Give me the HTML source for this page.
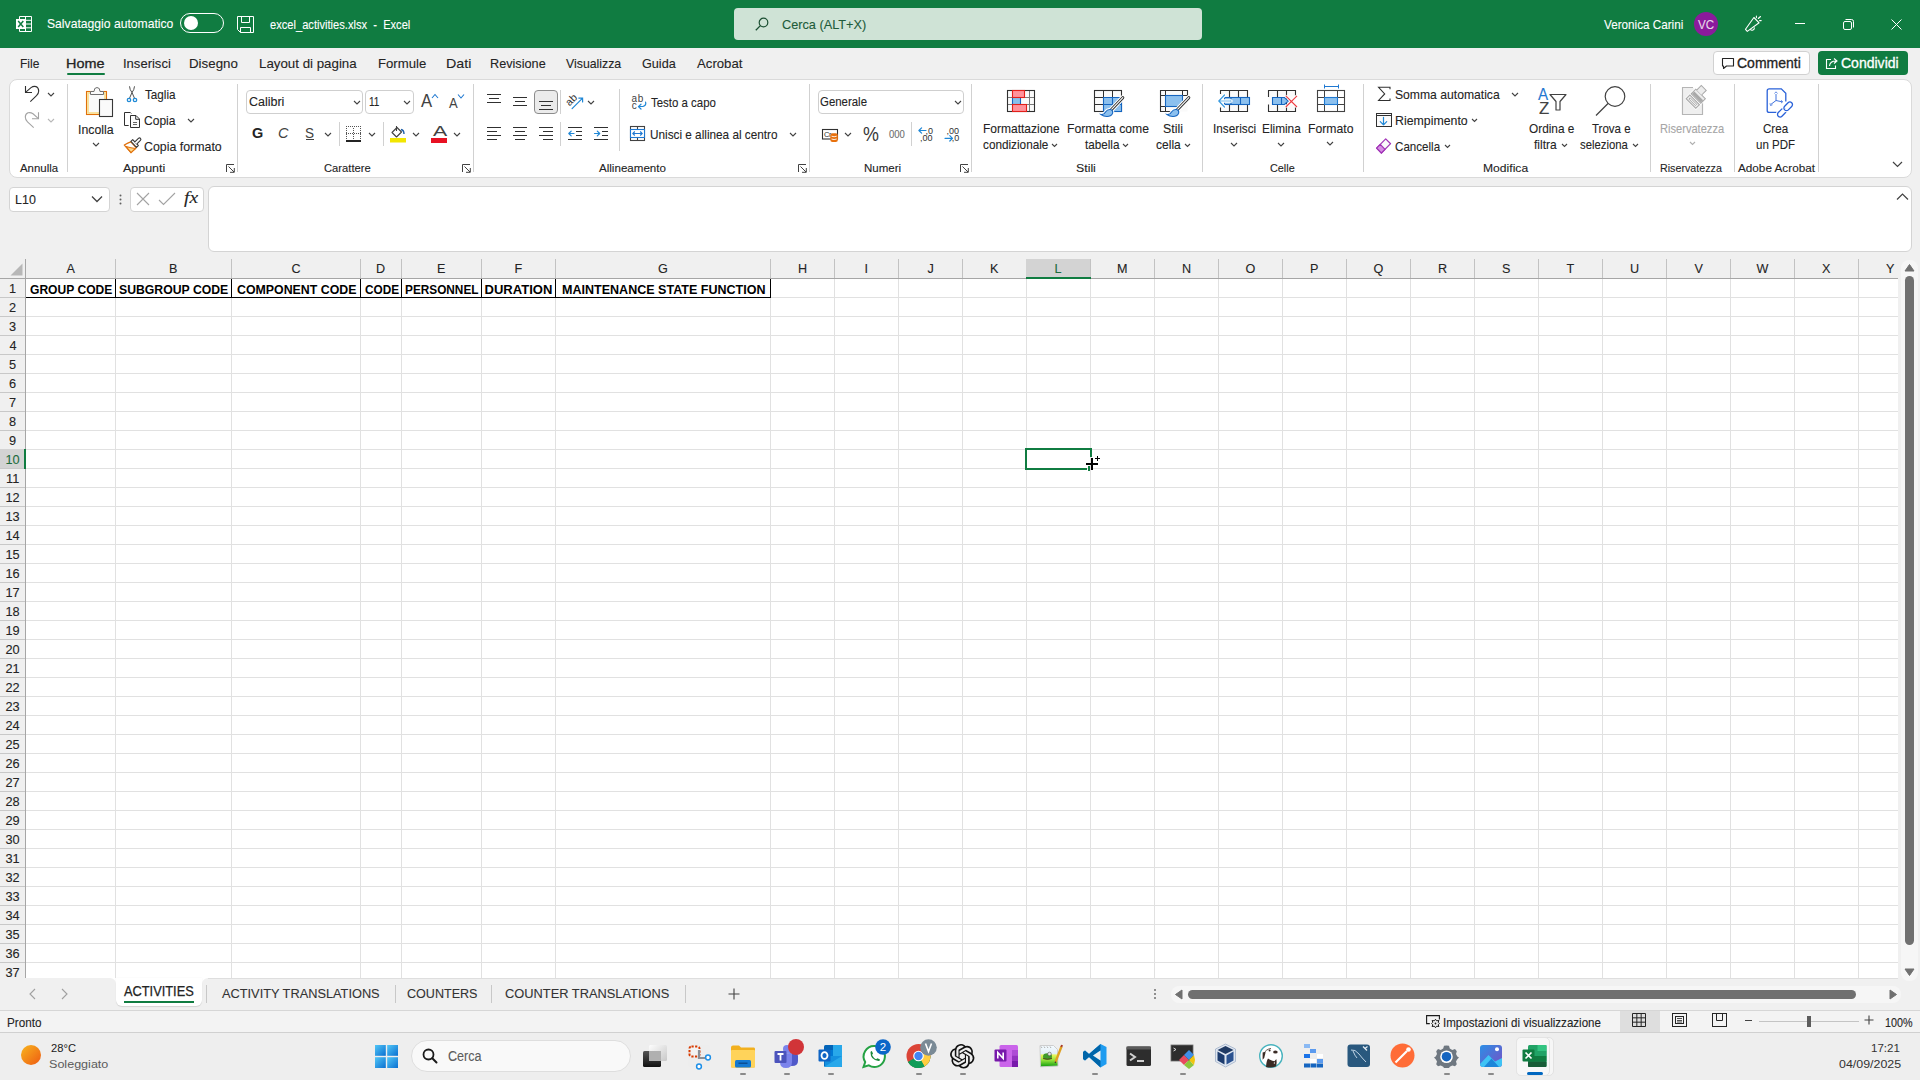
<!DOCTYPE html>
<html><head><meta charset="utf-8"><title>Excel</title>
<style>
html,body{margin:0;padding:0;width:1920px;height:1080px;overflow:hidden;background:#f0f0f0;font-family:'Liberation Sans', sans-serif;}
svg{overflow:visible}
</style></head><body>
<div style="position:absolute;left:0px;top:0px;width:1920px;height:48px;background:#107c41;"></div>
<svg style="position:absolute;left:16px;top:16px;" width="17" height="17" viewBox="0 0 17 17">
<path d="M3.5 0.5h12v15h-12z" fill="none" stroke="#fff" stroke-width="1"/>
<path d="M3.5 4.3h12M3.5 8h12M3.5 11.8h12M9.5 0.5v15" stroke="#fff" stroke-width="1"/>
<rect x="0" y="3" width="9.5" height="10" fill="#fff"/>
<path d="M2.2 5.1L7.3 11.1M7.3 5.1L2.2 11.1" stroke="#107c41" stroke-width="1.5"/>
</svg>
<div style="position:absolute;left:47.07px;top:17.00px;font:normal normal 13.04px/13.04px 'Liberation Sans', sans-serif;color:#fff;white-space:pre;transform:scaleX(0.9328);transform-origin:0 0;-webkit-text-stroke:0.1px #fff;">Salvataggio automatico</div>
<div style="position:absolute;left:180px;top:13px;width:44px;height:20px;box-sizing:border-box;border:1px solid #fff;border-radius:10px;"></div>
<svg style="position:absolute;left:184px;top:16px;" width="14" height="14" viewBox="0 0 14 14"><circle cx="7" cy="7" r="7" fill="#fff"/></svg>
<svg style="position:absolute;left:237px;top:16px;" width="17" height="17" viewBox="0 0 17 17">
<path d="M0.5 0.5h16v16h-13l-3-3z" fill="none" stroke="#fff"/>
<path d="M4.5 0.5v6h8v-6M3.5 16.5v-5h10v5" fill="none" stroke="#fff"/>
</svg>
<div style="position:absolute;left:270.00px;top:18.00px;font:normal normal 13.04px/13.04px 'Liberation Sans', sans-serif;color:#fff;white-space:pre;transform:scaleX(0.8537);transform-origin:0 0;-webkit-text-stroke:0.1px #fff;">excel_activities.xlsx  -  Excel</div>
<div style="position:absolute;left:734px;top:8px;width:468px;height:32px;box-sizing:border-box;background:#cfe3d6;border-radius:4px;"></div>
<svg style="position:absolute;left:755px;top:17px;" width="14" height="14" viewBox="0 0 14 14"><circle cx="8.5" cy="5.5" r="4.3" fill="none" stroke="#1c4f33" stroke-width="1.2"/><path d="M5.4 8.6L0.8 13.2" stroke="#1c4f33" stroke-width="1.3"/></svg>
<div style="position:absolute;left:782.02px;top:18.00px;font:normal normal 13.04px/13.04px 'Liberation Sans', sans-serif;color:#215b3a;white-space:pre;transform:scaleX(0.9765);transform-origin:0 0;-webkit-text-stroke:0.1px #215b3a;">Cerca (ALT+X)</div>
<div style="position:absolute;left:1604.00px;top:18.00px;font:normal normal 13.04px/13.04px 'Liberation Sans', sans-serif;color:#fff;white-space:pre;transform:scaleX(0.8977);transform-origin:0 0;-webkit-text-stroke:0.1px #fff;">Veronica Carini</div>
<svg style="position:absolute;left:1694px;top:12px;" width="24" height="24" viewBox="0 0 24 24"><circle cx="12" cy="12" r="12" fill="#8b1a9c"/></svg>
<div style="position:absolute;left:1697.50px;top:19.00px;font:normal normal 12.32px/12.32px 'Liberation Sans', sans-serif;color:#e8d8ea;white-space:pre;transform:scaleX(0.9375);transform-origin:0 0;-webkit-text-stroke:0.1px #e8d8ea;">VC</div>
<svg style="position:absolute;left:1740px;top:12px;" width="24" height="24" viewBox="0 0 24 24">
<path d="M5.5 17.3L13.9 5.5L19.1 10.8L7.3 19.4Z" fill="none" stroke="#fff" stroke-width="1.1" stroke-linejoin="round"/>
<path d="M10.2 17.2A2.3 2.3 0 0 0 14.3 15.3" fill="none" stroke="#fff" stroke-width="1.1"/>
<path d="M16.4 4V5.6M18.3 6.5L20.5 4.5M19.6 8.6H21.2" stroke="#fff" stroke-width="1.1" stroke-linecap="round"/>
</svg>
<div style="position:absolute;left:1795px;top:23px;width:10px;height:1px;background:#fff;"></div>
<svg style="position:absolute;left:1840px;top:16px;" width="16" height="16" viewBox="0 0 16 16"><rect x="3.5" y="5.5" width="8" height="8" rx="1.5" fill="none" stroke="#fff" stroke-width="1"/><path d="M5.5 3.5H11.5Q13.5 3.5 13.5 5.5V11.5" fill="none" stroke="#fff" stroke-width="1"/></svg>
<svg style="position:absolute;left:1891px;top:19px;" width="11" height="11" viewBox="0 0 11 11"><path d="M0.5 0.5l10 10M10.5 0.5l-10 10" stroke="#fff" stroke-width="1"/></svg>
<div style="position:absolute;left:20.07px;top:57.00px;font:normal normal 13.04px/13.04px 'Liberation Sans', sans-serif;color:#242424;white-space:pre;transform:scaleX(0.9250);transform-origin:0 0;-webkit-text-stroke:0.1px #242424;">File</div>
<div style="position:absolute;left:66.39px;top:57.00px;font:normal normal 13.04px/13.04px 'Liberation Sans', sans-serif;color:#242424;white-space:pre;transform:scaleX(1.1061);transform-origin:0 0;-webkit-text-stroke:0.3px #242424;">Home</div>
<div style="position:absolute;left:123.00px;top:57.00px;font:normal normal 13.04px/13.04px 'Liberation Sans', sans-serif;color:#242424;white-space:pre;-webkit-text-stroke:0.1px #242424;">Inserisci</div>
<div style="position:absolute;left:189.48px;top:57.00px;font:normal normal 13.04px/13.04px 'Liberation Sans', sans-serif;color:#242424;white-space:pre;transform:scaleX(1.0217);transform-origin:0 0;-webkit-text-stroke:0.1px #242424;">Disegno</div>
<div style="position:absolute;left:258.98px;top:57.00px;font:normal normal 13.04px/13.04px 'Liberation Sans', sans-serif;color:#242424;white-space:pre;transform:scaleX(1.0211);transform-origin:0 0;-webkit-text-stroke:0.1px #242424;">Layout di pagina</div>
<div style="position:absolute;left:377.99px;top:57.00px;font:normal normal 13.04px/13.04px 'Liberation Sans', sans-serif;color:#242424;white-space:pre;transform:scaleX(1.0109);transform-origin:0 0;-webkit-text-stroke:0.1px #242424;">Formule</div>
<div style="position:absolute;left:445.90px;top:57.00px;font:normal normal 13.04px/13.04px 'Liberation Sans', sans-serif;color:#242424;white-space:pre;transform:scaleX(1.0952);transform-origin:0 0;-webkit-text-stroke:0.1px #242424;">Dati</div>
<div style="position:absolute;left:490.03px;top:57.00px;font:normal normal 13.04px/13.04px 'Liberation Sans', sans-serif;color:#242424;white-space:pre;transform:scaleX(0.9732);transform-origin:0 0;-webkit-text-stroke:0.1px #242424;">Revisione</div>
<div style="position:absolute;left:566.00px;top:57.00px;font:normal normal 13.04px/13.04px 'Liberation Sans', sans-serif;color:#242424;white-space:pre;transform:scaleX(0.9449);transform-origin:0 0;-webkit-text-stroke:0.1px #242424;">Visualizza</div>
<div style="position:absolute;left:641.53px;top:57.00px;font:normal normal 13.04px/13.04px 'Liberation Sans', sans-serif;color:#242424;white-space:pre;transform:scaleX(0.9706);transform-origin:0 0;-webkit-text-stroke:0.1px #242424;">Guida</div>
<div style="position:absolute;left:697.00px;top:57.00px;font:normal normal 13.04px/13.04px 'Liberation Sans', sans-serif;color:#242424;white-space:pre;transform:scaleX(1.0111);transform-origin:0 0;-webkit-text-stroke:0.1px #242424;">Acrobat</div>
<div style="position:absolute;left:67px;top:73px;width:38px;height:2px;background:#107c41;border-radius:1px;"></div>
<div style="position:absolute;left:1713px;top:51px;width:97px;height:24px;box-sizing:border-box;background:#fff;border:1px solid #d1d1d1;border-radius:4px;"></div>
<svg style="position:absolute;left:1721px;top:57px;" width="14" height="13" viewBox="0 0 14 13"><path d="M1.5 1.5h11v7.5h-7l-3 2.5v-2.5h-1z" fill="none" stroke="#242424" stroke-width="1.1" stroke-linejoin="round"/></svg>
<div style="position:absolute;left:1736.98px;top:57.00px;font:normal normal 13.77px/13.77px 'Liberation Sans', sans-serif;color:#242424;white-space:pre;transform:scaleX(1.0164);transform-origin:0 0;-webkit-text-stroke:0.3px #242424;">Commenti</div>
<div style="position:absolute;left:1818px;top:51px;width:90px;height:24px;box-sizing:border-box;background:#107c41;border-radius:4px;"></div>
<svg style="position:absolute;left:1825px;top:57px;" width="14" height="13" viewBox="0 0 14 13"><path d="M6 2.5h-4.5v9h9v-3" fill="none" stroke="#fff" stroke-width="1.1"/><path d="M4.5 9q0.5-5 6.5-5M9 1.5l3 2.5-3 2.5" fill="none" stroke="#fff" stroke-width="1.1"/></svg>
<div style="position:absolute;left:1840.98px;top:57.00px;font:normal normal 13.77px/13.77px 'Liberation Sans', sans-serif;color:#fff;white-space:pre;transform:scaleX(1.0182);transform-origin:0 0;-webkit-text-stroke:0.3px #fff;">Condividi</div>
<div style="position:absolute;left:9px;top:79px;width:1903px;height:99px;box-sizing:border-box;background:#fff;border:1px solid #dadada;border-radius:8px;"></div>
<svg style="position:absolute;left:0;top:0" width="70" height="140">
<path d="M25.5 86V92.5H32" fill="none" stroke="#303030" stroke-width="1.1"/>
<path d="M25.8 92.2L31 87.6Q33.5 85.9 36 86.6Q38.7 87.9 38.7 91Q38.7 93.6 36.5 95.6L30.3 101.7" fill="none" stroke="#303030" stroke-width="1.1"/>
<path d="M38.5 112.3V118.7H32" fill="none" stroke="#a3a3a3" stroke-width="1.1"/>
<path d="M38.2 118.4L33 113.8Q30.5 112.1 28 112.8Q25.3 114 25.3 117.1Q25.3 119.7 27.5 121.8L33.7 127.6" fill="none" stroke="#a3a3a3" stroke-width="1.1"/>
</svg>
<svg style="position:absolute;left:46.5px;top:92px;" width="8" height="5.0" viewBox="0 0 8 5.0"><path d="M1 1L4.0 4.0L7 1" fill="none" stroke="#424242" stroke-width="1.1"/></svg>
<svg style="position:absolute;left:46.5px;top:118px;" width="8" height="5.0" viewBox="0 0 8 5.0"><path d="M1 1L4.0 4.0L7 1" fill="none" stroke="#b8b8b8" stroke-width="1.1"/></svg>
<div style="position:absolute;left:67px;top:84px;width:1px;height:88px;background:#d1d1d1;"></div>
<div style="position:absolute;left:19.50px;top:163.00px;font:normal normal 11.59px/11.59px 'Liberation Sans', sans-serif;color:#242424;white-space:pre;transform:scaleX(0.9872);transform-origin:0 0;-webkit-text-stroke:0.1px #242424;">Annulla</div>
<svg style="position:absolute;left:85px;top:86px;" width="30" height="33" viewBox="0 0 30 33">
<rect x="1.5" y="5.5" width="20" height="23" fill="#fafafa" stroke="#e0700b" stroke-width="1.1"/>
<rect x="3" y="7" width="17" height="20" fill="none" stroke="#f8dc8c" stroke-width="1.7"/>
<rect x="4" y="8" width="15" height="18" fill="#fafafa"/>
<path d="M5.5 8.5v-3h3.5q0-4 3-4t3 4h3.5v3z" fill="#fafafa" stroke="#707070" stroke-width="1"/>
<rect x="14.5" y="13.5" width="13" height="17" fill="#fafafa" stroke="#383838" stroke-width="1.1"/>
<rect x="13" y="12" width="1" height="1" fill="#fff"/>
</svg>
<div style="position:absolute;left:78.03px;top:124.00px;font:normal normal 12.68px/12.68px 'Liberation Sans', sans-serif;color:#242424;white-space:pre;transform:scaleX(0.9722);transform-origin:0 0;-webkit-text-stroke:0.1px #242424;">Incolla</div>
<svg style="position:absolute;left:92px;top:142px;" width="8" height="5.0" viewBox="0 0 8 5.0"><path d="M1 1L4.0 4.0L7 1" fill="none" stroke="#424242" stroke-width="1.1"/></svg>
<svg style="position:absolute;left:0;top:0" width="150" height="140">
<path d="M129.5 86.3Q129.8 90 132 92.5L129.6 98M134.5 86.3Q134.2 90 132 92.5L134.4 98" fill="none" stroke="#505050" stroke-width="1"/>
<circle cx="129" cy="100" r="1.7" fill="#fff" stroke="#1f8ad6" stroke-width="1.3"/>
<circle cx="135" cy="100" r="1.7" fill="#fff" stroke="#1f8ad6" stroke-width="1.3"/>
</svg>
<div style="position:absolute;left:144.50px;top:88.00px;font:normal normal 13.04px/13.04px 'Liberation Sans', sans-serif;color:#242424;white-space:pre;transform:scaleX(0.8971);transform-origin:0 0;-webkit-text-stroke:0.1px #242424;">Taglia</div>
<svg style="position:absolute;left:0;top:0" width="150" height="140">
<path d="M128.7 125.5H124.5V112.5H130.3L131.3 113.5" fill="none" stroke="#303030" stroke-width="1"/>
<path d="M130.5 115.5H136L139.5 119V127.5H130.5Z" fill="#fafafa" stroke="#303030" stroke-width="1"/>
<path d="M135.7 115.7V119.3H139.3" fill="none" stroke="#303030" stroke-width="1"/>
<path d="M133 122.5H137M133 124.5H137" stroke="#505050" stroke-width="0.9"/>
</svg>
<div style="position:absolute;left:143.58px;top:114.00px;font:normal normal 13.04px/13.04px 'Liberation Sans', sans-serif;color:#242424;white-space:pre;transform:scaleX(0.9242);transform-origin:0 0;-webkit-text-stroke:0.1px #242424;">Copia</div>
<svg style="position:absolute;left:187px;top:118px;" width="8" height="5.0" viewBox="0 0 8 5.0"><path d="M1 1L4.0 4.0L7 1" fill="none" stroke="#424242" stroke-width="1.1"/></svg>
<svg style="position:absolute;left:118px;top:132px;" width="26" height="24" viewBox="0 0 26 24">
<path d="M6.3 13Q10 11 12.8 9.9L18.3 15.9Q15 18.5 13 20.7Z" fill="#fff" stroke="#e0700b" stroke-width="1.2" stroke-linejoin="round"/>
<path d="M8 14.5Q13 16 17.5 16.5L13 20.7Z" fill="#fbd88a" stroke="#e0700b" stroke-width="1.1" stroke-linejoin="round"/>
<path d="M12.9 9.4L14.7 7.7L20.3 13.5L18.5 15.4Z" fill="#fff" stroke="#383838" stroke-width="1.1" stroke-linejoin="round"/>
<path d="M16.6 10.2L20.4 6.4Q21.6 5.4 22.5 6.4Q23.4 7.4 22.4 8.4L18.7 12.2" fill="#fff" stroke="#383838" stroke-width="1.1" stroke-linejoin="round"/>
</svg>
<div style="position:absolute;left:143.55px;top:140.00px;font:normal normal 13.04px/13.04px 'Liberation Sans', sans-serif;color:#242424;white-space:pre;transform:scaleX(0.9500);transform-origin:0 0;-webkit-text-stroke:0.1px #242424;">Copia formato</div>
<div style="position:absolute;left:123.00px;top:163.00px;font:normal normal 11.59px/11.59px 'Liberation Sans', sans-serif;color:#242424;white-space:pre;transform:scaleX(1.0769);transform-origin:0 0;-webkit-text-stroke:0.1px #242424;">Appunti</div>
<svg style="position:absolute;left:226px;top:164px;" width="9" height="9" viewBox="0 0 9 9"><path d="M0.5 8V0.5H8" fill="none" stroke="#424242"/><path d="M2.5 2.5L8 8M8.3 4v4.3H4" fill="none" stroke="#424242"/></svg>
<div style="position:absolute;left:237px;top:84px;width:1px;height:88px;background:#d1d1d1;"></div>
<div style="position:absolute;left:246px;top:90px;width:117px;height:24px;box-sizing:border-box;border:1px solid #cfcfcf;border-radius:4px;background:#fff;"></div>
<div style="position:absolute;left:248.51px;top:96.00px;font:normal normal 12.68px/12.68px 'Liberation Sans', sans-serif;color:#242424;white-space:pre;transform:scaleX(0.9853);transform-origin:0 0;-webkit-text-stroke:0.1px #242424;">Calibri</div>
<svg style="position:absolute;left:353px;top:100px;" width="8" height="5.0" viewBox="0 0 8 5.0"><path d="M1 1L4.0 4.0L7 1" fill="none" stroke="#424242" stroke-width="1.1"/></svg>
<div style="position:absolute;left:365px;top:90px;width:49px;height:24px;box-sizing:border-box;border:1px solid #cfcfcf;border-radius:4px;background:#fff;"></div>
<div style="position:absolute;left:368.71px;top:96.00px;font:normal normal 12.68px/12.68px 'Liberation Sans', sans-serif;color:#242424;white-space:pre;transform:scaleX(0.7917);transform-origin:0 0;-webkit-text-stroke:0.1px #242424;">11</div>
<svg style="position:absolute;left:403px;top:100px;" width="8" height="5.0" viewBox="0 0 8 5.0"><path d="M1 1L4.0 4.0L7 1" fill="none" stroke="#424242" stroke-width="1.1"/></svg>
<div style="position:absolute;left:421.00px;top:92.00px;font:normal normal 18.84px/18.84px 'Liberation Sans', sans-serif;color:#424242;white-space:pre;transform:scaleX(0.8846);transform-origin:0 0;-webkit-text-stroke:0.01px #424242;">A</div>
<svg style="position:absolute;left:431px;top:93px;" width="8" height="6" viewBox="0 0 8 6"><path d="M1 5L4 1.5L7 5" fill="none" stroke="#1f78d1" stroke-width="1.1"/></svg>
<div style="position:absolute;left:449.00px;top:97.00px;font:normal normal 13.77px/13.77px 'Liberation Sans', sans-serif;color:#424242;white-space:pre;transform:scaleX(0.9444);transform-origin:0 0;-webkit-text-stroke:0.01px #424242;">A</div>
<svg style="position:absolute;left:457px;top:93px;" width="8" height="6" viewBox="0 0 8 6"><path d="M1 1.5L4 5L7 1.5" fill="none" stroke="#1f78d1" stroke-width="1.1"/></svg>
<div style="position:absolute;left:252.05px;top:125.00px;font:normal bold 15.22px/15.22px 'Liberation Sans', sans-serif;color:#242424;white-space:pre;transform:scaleX(0.9500);transform-origin:0 0;">G</div>
<div style="position:absolute;left:278.05px;top:125.00px;font:italic normal 15.22px/15.22px 'Liberation Sans', sans-serif;color:#424242;white-space:pre;transform:scaleX(0.9500);transform-origin:0 0;-webkit-text-stroke:0.01px #424242;">C</div>
<div style="position:absolute;left:305.11px;top:125.00px;font:normal normal 15.22px/15.22px 'Liberation Sans', sans-serif;color:#424242;white-space:pre;transform:scaleX(0.8889);transform-origin:0 0;-webkit-text-stroke:0.01px #424242;">S</div>
<div style="position:absolute;left:306px;top:139px;width:8px;height:1px;background:#424242;"></div>
<svg style="position:absolute;left:324px;top:132px;" width="8" height="5.0" viewBox="0 0 8 5.0"><path d="M1 1L4.0 4.0L7 1" fill="none" stroke="#424242" stroke-width="1.1"/></svg>
<div style="position:absolute;left:339px;top:122px;width:1px;height:24px;background:#d1d1d1;"></div>
<svg style="position:absolute;left:0;top:0" width="480" height="180" shape-rendering="crispEdges"><g fill="#555"><rect x="346" y="126" width="1" height="1"/><rect x="346" y="133" width="1" height="1"/><rect x="348" y="126" width="1" height="1"/><rect x="348" y="133" width="1" height="1"/><rect x="350" y="126" width="1" height="1"/><rect x="350" y="133" width="1" height="1"/><rect x="352" y="126" width="1" height="1"/><rect x="352" y="133" width="1" height="1"/><rect x="354" y="126" width="1" height="1"/><rect x="354" y="133" width="1" height="1"/><rect x="356" y="126" width="1" height="1"/><rect x="356" y="133" width="1" height="1"/><rect x="358" y="126" width="1" height="1"/><rect x="358" y="133" width="1" height="1"/><rect x="360" y="126" width="1" height="1"/><rect x="360" y="133" width="1" height="1"/><rect x="346" y="128" width="1" height="1"/><rect x="360" y="128" width="1" height="1"/><rect x="353" y="128" width="1" height="1"/><rect x="346" y="130" width="1" height="1"/><rect x="360" y="130" width="1" height="1"/><rect x="353" y="130" width="1" height="1"/><rect x="346" y="132" width="1" height="1"/><rect x="360" y="132" width="1" height="1"/><rect x="353" y="132" width="1" height="1"/><rect x="346" y="134" width="1" height="1"/><rect x="360" y="134" width="1" height="1"/><rect x="353" y="134" width="1" height="1"/><rect x="346" y="136" width="1" height="1"/><rect x="360" y="136" width="1" height="1"/><rect x="353" y="136" width="1" height="1"/><rect x="346" y="138" width="1" height="1"/><rect x="360" y="138" width="1" height="1"/><rect x="353" y="138" width="1" height="1"/></g><rect x="346" y="140" width="15" height="1.5" fill="#242424"/></svg>
<svg style="position:absolute;left:368px;top:132px;" width="8" height="5.0" viewBox="0 0 8 5.0"><path d="M1 1L4.0 4.0L7 1" fill="none" stroke="#424242" stroke-width="1.1"/></svg>
<div style="position:absolute;left:383px;top:122px;width:1px;height:24px;background:#d1d1d1;"></div>
<svg style="position:absolute;left:389px;top:125px;" width="19" height="18" viewBox="0 0 19 18">
<path d="M3 7.5L8 2.5L12.5 7L7.5 12L3 7.5Z" fill="#fff" stroke="#424242" stroke-width="1.1" stroke-linejoin="round"/>
<path d="M7.5 1V6" stroke="#424242" stroke-width="1.1"/>
<path d="M12 4.5Q15 5 15 9" fill="none" stroke="#1f5fa8" stroke-width="1.4"/>
<rect x="1" y="13" width="16" height="4.5" fill="#f2e600"/>
</svg>
<svg style="position:absolute;left:412px;top:132px;" width="8" height="5.0" viewBox="0 0 8 5.0"><path d="M1 1L4.0 4.0L7 1" fill="none" stroke="#424242" stroke-width="1.1"/></svg>
<div style="position:absolute;left:432.50px;top:123.00px;font:normal normal 15.22px/15.22px 'Liberation Sans', sans-serif;color:#424242;white-space:pre;transform:scaleX(1.4000);transform-origin:0 0;-webkit-text-stroke:0.01px #424242;">A</div>
<div style="position:absolute;left:431px;top:138px;width:16px;height:4.5px;background:#e81123;"></div>
<svg style="position:absolute;left:453px;top:132px;" width="8" height="5.0" viewBox="0 0 8 5.0"><path d="M1 1L4.0 4.0L7 1" fill="none" stroke="#424242" stroke-width="1.1"/></svg>
<div style="position:absolute;left:323.53px;top:163.00px;font:normal normal 11.59px/11.59px 'Liberation Sans', sans-serif;color:#242424;white-space:pre;transform:scaleX(0.9681);transform-origin:0 0;-webkit-text-stroke:0.1px #242424;">Carattere</div>
<svg style="position:absolute;left:462px;top:164px;" width="9" height="9" viewBox="0 0 9 9"><path d="M0.5 8V0.5H8" fill="none" stroke="#424242"/><path d="M2.5 2.5L8 8M8.3 4v4.3H4" fill="none" stroke="#424242"/></svg>
<div style="position:absolute;left:473px;top:84px;width:1px;height:88px;background:#d1d1d1;"></div>
<svg style="position:absolute;left:0;top:0" width="700" height="180" shape-rendering="crispEdges"><rect x="487" y="94" width="14" height="1" fill="#303030"/><rect x="489" y="98" width="10" height="1" fill="#303030"/><rect x="487" y="102" width="14" height="1" fill="#303030"/></svg>
<svg style="position:absolute;left:0;top:0" width="700" height="180" shape-rendering="crispEdges"><rect x="513" y="97" width="14" height="1" fill="#303030"/><rect x="515" y="101" width="10" height="1" fill="#303030"/><rect x="513" y="105" width="14" height="1" fill="#303030"/></svg>
<div style="position:absolute;left:534px;top:90px;width:24px;height:24px;box-sizing:border-box;border:1px solid #8c8c8c;border-radius:4px;background:#ebebeb;"></div>
<svg style="position:absolute;left:0;top:0" width="700" height="180" shape-rendering="crispEdges"><rect x="539" y="101" width="14" height="1" fill="#303030"/><rect x="541" y="105" width="10" height="1" fill="#303030"/><rect x="539" y="109" width="14" height="1" fill="#303030"/></svg>
<div style="position:absolute;left:560px;top:90px;width:1px;height:24px;background:#d1d1d1;"></div>
<svg style="position:absolute;left:0;top:0" width="700" height="180">
<text x="0" y="0" transform="translate(569.5 106.5) rotate(-45)" font-family="Liberation Sans" font-size="10.5" fill="#303030">ab</text>
<path d="M572.1 108.6L582.6 98.1M578.8 98.1H582.6V101.9" fill="none" stroke="#1f87d6" stroke-width="1.2" stroke-linecap="round"/>
<text x="631.5" y="101.6" font-family="Liberation Sans" font-size="10" fill="#424242" letter-spacing="0.8">ab</text>
<text x="631.8" y="108.6" font-family="Liberation Sans" font-size="10" fill="#424242">c</text>
<path d="M645.6 102.2Q646.5 105.5 643 106.5H638.6M641 104.2L638.4 106.6L641 109" fill="none" stroke="#1f87d6" stroke-width="1.2" stroke-linecap="round" stroke-linejoin="round"/>
</svg>
<svg style="position:absolute;left:587px;top:100px;" width="8" height="5.0" viewBox="0 0 8 5.0"><path d="M1 1L4.0 4.0L7 1" fill="none" stroke="#424242" stroke-width="1.1"/></svg>
<div style="position:absolute;left:619px;top:89px;width:1px;height:62px;background:#d1d1d1;"></div>
<div style="position:absolute;left:650.60px;top:96.00px;font:normal normal 13.04px/13.04px 'Liberation Sans', sans-serif;color:#242424;white-space:pre;transform:scaleX(0.8784);transform-origin:0 0;-webkit-text-stroke:0.1px #242424;">Testo a capo</div>
<svg style="position:absolute;left:0;top:0" width="700" height="180" shape-rendering="crispEdges"><rect x="487" y="127" width="14" height="1" fill="#303030"/><rect x="487" y="131" width="10" height="1" fill="#303030"/><rect x="487" y="135" width="14" height="1" fill="#303030"/><rect x="487" y="139" width="10" height="1" fill="#303030"/></svg>
<svg style="position:absolute;left:0;top:0" width="700" height="180" shape-rendering="crispEdges"><rect x="513" y="127" width="14" height="1" fill="#303030"/><rect x="515" y="131" width="10" height="1" fill="#303030"/><rect x="513" y="135" width="14" height="1" fill="#303030"/><rect x="515" y="139" width="10" height="1" fill="#303030"/></svg>
<svg style="position:absolute;left:0;top:0" width="700" height="180" shape-rendering="crispEdges"><rect x="539" y="127" width="14" height="1" fill="#303030"/><rect x="543" y="131" width="10" height="1" fill="#303030"/><rect x="539" y="135" width="14" height="1" fill="#303030"/><rect x="543" y="139" width="10" height="1" fill="#303030"/></svg>
<div style="position:absolute;left:560px;top:122px;width:1px;height:24px;background:#d1d1d1;"></div>
<svg style="position:absolute;left:0;top:0" width="700" height="180" shape-rendering="crispEdges"><rect x="568" y="127" width="14" height="1" fill="#303030"/><rect x="576" y="131" width="6" height="1" fill="#303030"/><rect x="576" y="135" width="6" height="1" fill="#303030"/><rect x="568" y="139" width="14" height="1" fill="#303030"/></svg>
<svg style="position:absolute;left:0;top:0" width="700" height="180" shape-rendering="crispEdges"><rect x="594" y="127" width="14" height="1" fill="#303030"/><rect x="602" y="131" width="6" height="1" fill="#303030"/><rect x="602" y="135" width="6" height="1" fill="#303030"/><rect x="594" y="139" width="14" height="1" fill="#303030"/></svg>
<svg style="position:absolute;left:0;top:0" width="700" height="180">
<path d="M568.8 133.5H574M571.2 131.1L568.8 133.5L571.2 135.9" fill="none" stroke="#1f87d6" stroke-width="1.2" stroke-linecap="round" stroke-linejoin="round"/>
<path d="M594.5 133.5H599.7M597.3 131.1L599.7 133.5L597.3 135.9" fill="none" stroke="#1f87d6" stroke-width="1.2" stroke-linecap="round" stroke-linejoin="round"/>
</svg>
<svg style="position:absolute;left:629px;top:125px;" width="17" height="17" viewBox="0 0 17 17">
<rect x="1.5" y="1.5" width="14" height="14" fill="#fff" stroke="#424242" stroke-width="1.1"/>
<path d="M8.5 1.5V4.5M8.5 12.5V15.5" stroke="#424242" stroke-width="1.1"/>
<rect x="1.5" y="4.5" width="14" height="8" fill="#fff" stroke="#1f78d1" stroke-width="1.1"/>
<path d="M4 8.5H13M5.8 6.5L3.8 8.5L5.8 10.5M11.2 6.5L13.2 8.5L11.2 10.5" fill="none" stroke="#1f78d1" stroke-width="1.1"/>
</svg>
<div style="position:absolute;left:649.70px;top:128.00px;font:normal normal 13.04px/13.04px 'Liberation Sans', sans-serif;color:#242424;white-space:pre;transform:scaleX(0.9029);transform-origin:0 0;-webkit-text-stroke:0.1px #242424;">Unisci e allinea al centro</div>
<svg style="position:absolute;left:789px;top:132px;" width="8" height="5.0" viewBox="0 0 8 5.0"><path d="M1 1L4.0 4.0L7 1" fill="none" stroke="#424242" stroke-width="1.1"/></svg>
<div style="position:absolute;left:599.00px;top:163.00px;font:normal normal 11.59px/11.59px 'Liberation Sans', sans-serif;color:#242424;white-space:pre;-webkit-text-stroke:0.1px #242424;">Allineamento</div>
<svg style="position:absolute;left:798px;top:164px;" width="9" height="9" viewBox="0 0 9 9"><path d="M0.5 8V0.5H8" fill="none" stroke="#424242"/><path d="M2.5 2.5L8 8M8.3 4v4.3H4" fill="none" stroke="#424242"/></svg>
<div style="position:absolute;left:809px;top:84px;width:1px;height:88px;background:#d1d1d1;"></div>
<div style="position:absolute;left:818px;top:90px;width:146px;height:24px;box-sizing:border-box;border:1px solid #cfcfcf;border-radius:4px;background:#fff;"></div>
<div style="position:absolute;left:820.10px;top:96.00px;font:normal normal 12.68px/12.68px 'Liberation Sans', sans-serif;color:#242424;white-space:pre;transform:scaleX(0.9020);transform-origin:0 0;-webkit-text-stroke:0.1px #242424;">Generale</div>
<svg style="position:absolute;left:954px;top:100px;" width="8" height="5.0" viewBox="0 0 8 5.0"><path d="M1 1L4.0 4.0L7 1" fill="none" stroke="#424242" stroke-width="1.1"/></svg>
<svg style="position:absolute;left:0;top:0" width="1000" height="180">
<rect x="822.5" y="129.5" width="15" height="9.5" fill="#fff" stroke="#303030" stroke-width="1.1"/>
<text x="824" y="137" font-family="Liberation Sans" font-size="7.5" fill="#303030" letter-spacing="-0.3">Cr</text>
<rect x="830.3" y="133.2" width="7.6" height="8.8" rx="2.2" fill="#e8700c"/>
<path d="M831.5 136.2Q834.1 137.3 836.7 136.2M831.5 139Q834.1 140.1 836.7 139" fill="none" stroke="#fff" stroke-width="0.9"/>
<path d="M919 130.5H926M921.6 127.8L918.9 130.5L921.6 133.2" fill="none" stroke="#1f87d6" stroke-width="1.2" stroke-linecap="round" stroke-linejoin="round"/>
<text x="925.5" y="133.5" font-family="Liberation Sans" font-size="9" fill="#303030">,0</text>
<text x="920" y="141.3" font-family="Liberation Sans" font-size="9" fill="#303030">,00</text>
<text x="946.5" y="133.5" font-family="Liberation Sans" font-size="9" fill="#303030">,00</text>
<path d="M945 138.3H952.5M949.8 135.6L952.5 138.3L949.8 141" fill="none" stroke="#1f87d6" stroke-width="1.2" stroke-linecap="round" stroke-linejoin="round"/>
<text x="951.8" y="141.3" font-family="Liberation Sans" font-size="9" fill="#303030">,0</text>
</svg>
<svg style="position:absolute;left:844px;top:132px;" width="8" height="5.0" viewBox="0 0 8 5.0"><path d="M1 1L4.0 4.0L7 1" fill="none" stroke="#424242" stroke-width="1.1"/></svg>
<div style="position:absolute;left:862.62px;top:124.00px;font:normal normal 20.29px/20.29px 'Liberation Sans', sans-serif;color:#383838;white-space:pre;transform:scaleX(0.8824);transform-origin:0 0;-webkit-text-stroke:0.01px #383838;">%</div>
<div style="position:absolute;left:889.00px;top:130.00px;font:normal normal 10.14px/10.14px 'Liberation Sans', sans-serif;color:#6e6e6e;white-space:pre;transform:scaleX(0.9412);transform-origin:0 0;-webkit-text-stroke:0.1px #6e6e6e;">000</div>
<div style="position:absolute;left:911px;top:122px;width:1px;height:24px;background:#d1d1d1;"></div>
<div style="position:absolute;left:863.75px;top:163.00px;font:normal normal 11.59px/11.59px 'Liberation Sans', sans-serif;color:#242424;white-space:pre;transform:scaleX(0.9958);transform-origin:0 0;-webkit-text-stroke:0.1px #242424;">Numeri</div>
<svg style="position:absolute;left:960px;top:164px;" width="9" height="9" viewBox="0 0 9 9"><path d="M0.5 8V0.5H8" fill="none" stroke="#424242"/><path d="M2.5 2.5L8 8M8.3 4v4.3H4" fill="none" stroke="#424242"/></svg>
<div style="position:absolute;left:971px;top:84px;width:1px;height:88px;background:#d1d1d1;"></div>
<svg style="position:absolute;left:1006px;top:89px;" width="30" height="24" viewBox="0 0 30 24">
<rect x="1.5" y="1.5" width="27" height="21" fill="#fafafa"/>
<path d="M1.5 8.5H28.5M1.5 15.5H28.5M23.5 1.5V22.5" fill="none" stroke="#7a7a7a" stroke-width="1"/>
<rect x="1.5" y="1.5" width="27" height="21" fill="none" stroke="#303030" stroke-width="1.1"/>
<rect x="6.5" y="8.5" width="8" height="7" fill="#88c0ec"/>
<path d="M6.5 8.5V15.5M14.5 8.5V15.5" stroke="#1565c0" stroke-width="1.1"/>
<rect x="6.5" y="1.5" width="12" height="7" fill="#ff939c" stroke="#e3201b" stroke-width="1.1"/>
<rect x="6.5" y="15.5" width="14" height="7" fill="#ff939c" stroke="#e3201b" stroke-width="1.1"/>
</svg>
<div style="position:absolute;left:982.58px;top:122.00px;font:normal normal 13.04px/13.04px 'Liberation Sans', sans-serif;color:#242424;white-space:pre;transform:scaleX(0.9207);transform-origin:0 0;-webkit-text-stroke:0.1px #242424;">Formattazione</div>
<div style="position:absolute;left:983.00px;top:138.00px;font:normal normal 13.04px/13.04px 'Liberation Sans', sans-serif;color:#242424;white-space:pre;transform:scaleX(0.9028);transform-origin:0 0;-webkit-text-stroke:0.1px #242424;">condizionale</div>
<svg style="position:absolute;left:1051px;top:143px;" width="7" height="4.5" viewBox="0 0 7 4.5"><path d="M1 1L3.5 3.5L6 1" fill="none" stroke="#424242" stroke-width="1.1"/></svg>
<svg style="position:absolute;left:1093px;top:89px;" width="32" height="30" viewBox="0 0 32 30">
<rect x="1.5" y="1.5" width="27" height="21" fill="#fafafa" stroke="#303030" stroke-width="1.1"/>
<rect x="10.5" y="8.5" width="18" height="14" fill="#8cc0ee"/>
<path d="M1.5 8.5H28.5M1.5 15.5H10.5M10.5 1.5V8.5M19.5 1.5V8.5" fill="none" stroke="#303030" stroke-width="1"/>
<path d="M10.5 22.5V8.5H28.5V22.5H10.5M10.5 15.5H28.5M19.5 8.5V22.5" fill="none" stroke="#1565c0" stroke-width="1.1"/>
<path d="M18.3 20.7L29.8 8.7" stroke="#fff" stroke-width="5" stroke-linecap="round"/>
<path d="M8 25.5Q11 26 12.5 23Q14.5 20 17.5 20.5Q20.5 21.5 19.5 24.5Q18 27.5 14 27.5Q10.5 27.5 8 25.5Z" fill="#fff" stroke="#fff" stroke-width="3"/>
<path d="M18.3 20.7L29.8 8.7" stroke="#303030" stroke-width="3" stroke-linecap="round"/>
<path d="M18.3 20.7L29.8 8.7" stroke="#fff" stroke-width="1.1" stroke-linecap="round"/>
<path d="M8 25.5Q11 26 12.5 23Q14.5 20 17.5 20.5Q20.5 21.5 19.5 24.5Q18 27.5 14 27.5Q10.5 27.5 8 25.5Z" fill="#8cc0ee" stroke="#1565c0" stroke-width="1.1"/>
</svg>
<div style="position:absolute;left:1066.56px;top:122.00px;font:normal normal 13.04px/13.04px 'Liberation Sans', sans-serif;color:#242424;white-space:pre;transform:scaleX(0.9360);transform-origin:0 0;-webkit-text-stroke:0.1px #242424;">Formatta come</div>
<div style="position:absolute;left:1085.00px;top:138.00px;font:normal normal 13.04px/13.04px 'Liberation Sans', sans-serif;color:#242424;white-space:pre;transform:scaleX(0.8974);transform-origin:0 0;-webkit-text-stroke:0.1px #242424;">tabella</div>
<svg style="position:absolute;left:1122px;top:143px;" width="7" height="4.5" viewBox="0 0 7 4.5"><path d="M1 1L3.5 3.5L6 1" fill="none" stroke="#424242" stroke-width="1.1"/></svg>
<svg style="position:absolute;left:1159px;top:89px;" width="32" height="30" viewBox="0 0 32 30">
<rect x="1.5" y="1.5" width="27" height="21" fill="#fafafa"/>
<path d="M28.5 6.5V1.5H1.5V22.5H13" fill="none" stroke="#303030" stroke-width="1.1"/>
<path d="M1.5 6.5H28.5M1.5 17.5H6.5M6.5 1.5V22.5M23.5 1.5V6.5" fill="none" stroke="#303030" stroke-width="1"/>
<rect x="6.5" y="6.5" width="17" height="11" fill="#8cc0ee" stroke="#1565c0" stroke-width="1.1"/>
<path d="M18.3 20.7L29.8 8.7" stroke="#fff" stroke-width="5" stroke-linecap="round"/>
<path d="M8 25.5Q11 26 12.5 23Q14.5 20 17.5 20.5Q20.5 21.5 19.5 24.5Q18 27.5 14 27.5Q10.5 27.5 8 25.5Z" fill="#fff" stroke="#fff" stroke-width="3"/>
<path d="M18.3 20.7L29.8 8.7" stroke="#303030" stroke-width="3" stroke-linecap="round"/>
<path d="M18.3 20.7L29.8 8.7" stroke="#fff" stroke-width="1.1" stroke-linecap="round"/>
<path d="M8 25.5Q11 26 12.5 23Q14.5 20 17.5 20.5Q20.5 21.5 19.5 24.5Q18 27.5 14 27.5Q10.5 27.5 8 25.5Z" fill="#8cc0ee" stroke="#1565c0" stroke-width="1.1"/>
</svg>
<div style="position:absolute;left:1163.05px;top:122.00px;font:normal normal 13.04px/13.04px 'Liberation Sans', sans-serif;color:#242424;white-space:pre;transform:scaleX(0.9474);transform-origin:0 0;-webkit-text-stroke:0.1px #242424;">Stili</div>
<div style="position:absolute;left:1156.00px;top:138.00px;font:normal normal 13.04px/13.04px 'Liberation Sans', sans-serif;color:#242424;white-space:pre;transform:scaleX(0.9259);transform-origin:0 0;-webkit-text-stroke:0.1px #242424;">cella</div>
<svg style="position:absolute;left:1184px;top:143px;" width="7" height="4.5" viewBox="0 0 7 4.5"><path d="M1 1L3.5 3.5L6 1" fill="none" stroke="#424242" stroke-width="1.1"/></svg>
<div style="position:absolute;left:1076.44px;top:163.00px;font:normal normal 11.59px/11.59px 'Liberation Sans', sans-serif;color:#242424;white-space:pre;transform:scaleX(1.0647);transform-origin:0 0;-webkit-text-stroke:0.1px #242424;">Stili</div>
<div style="position:absolute;left:1202px;top:84px;width:1px;height:88px;background:#d1d1d1;"></div>
<svg style="position:absolute;left:0;top:0" width="1400" height="140">
<rect x="1220.5" y="90.5" width="27" height="21" fill="#fafafa"/>
<path d="M1220.5 94V90.5H1247.5V111.5H1220.5V107.5M1229.5 90.5V111.5M1238.5 90.5V111.5" fill="none" stroke="#303030" stroke-width="1.1"/>
<rect x="1224.5" y="97.5" width="25" height="7" fill="#8cc0ee" stroke="#1565c0" stroke-width="1.1"/>
<path d="M1231 97.5V104.5M1240.5 97.5V104.5" stroke="#1565c0" stroke-width="1.1"/>
<path d="M1219 101H1231M1224.5 95L1218.8 101L1224.5 107" fill="none" stroke="#fff" stroke-width="3.4" stroke-linecap="round"/>
<path d="M1219 101H1231M1224.5 95L1218.8 101L1224.5 107" fill="none" stroke="#3a9be0" stroke-width="1.2" stroke-linecap="round"/>
<path d="M1220.5 101H1230" fill="none" stroke="#fff" stroke-width="0.6"/>
</svg>
<div style="position:absolute;left:1212.60px;top:122.00px;font:normal normal 13.04px/13.04px 'Liberation Sans', sans-serif;color:#242424;white-space:pre;transform:scaleX(0.9022);transform-origin:0 0;-webkit-text-stroke:0.1px #242424;">Inserisci</div>
<svg style="position:absolute;left:1230px;top:142px;" width="8" height="5.0" viewBox="0 0 8 5.0"><path d="M1 1L4.0 4.0L7 1" fill="none" stroke="#424242" stroke-width="1.1"/></svg>
<svg style="position:absolute;left:0;top:0" width="1400" height="140">
<rect x="1268.5" y="90.5" width="27" height="21" fill="#fafafa"/>
<path d="M1268.5 97V90.5H1295.5V96M1268.5 104.5V111.5H1295.5V106M1277.5 90.5V111.5M1286.5 90.5V111.5" fill="none" stroke="#303030" stroke-width="1.1"/>
<path d="M1272.5 97.5H1284.5L1288.3 101L1284.5 104.5H1272.5Z" fill="#8cc0ee" stroke="#1565c0" stroke-width="1.1"/>
<path d="M1281.5 97.5V104.5" stroke="#1565c0" stroke-width="1.1"/>
<path d="M1285.8 95.8L1297 107M1297 95.8L1285.8 107" stroke="#fff" stroke-width="3"/>
<path d="M1285.8 95.8L1297 107M1297 95.8L1285.8 107" stroke="#ee3c42" stroke-width="1.1"/>
</svg>
<div style="position:absolute;left:1261.59px;top:122.00px;font:normal normal 13.04px/13.04px 'Liberation Sans', sans-serif;color:#242424;white-space:pre;transform:scaleX(0.9071);transform-origin:0 0;-webkit-text-stroke:0.1px #242424;">Elimina</div>
<svg style="position:absolute;left:1277px;top:142px;" width="8" height="5.0" viewBox="0 0 8 5.0"><path d="M1 1L4.0 4.0L7 1" fill="none" stroke="#424242" stroke-width="1.1"/></svg>
<svg style="position:absolute;left:1316px;top:84px;" width="30" height="29" viewBox="0 0 30 29">
<path d="M8.5 2.5H22.5M8.5 0.5V4.5M22.5 0.5V4.5" fill="none" stroke="#1f78d1" stroke-width="1"/>
<rect x="1.5" y="6.5" width="27" height="21" fill="#fff" stroke="#424242" stroke-width="1.1"/>
<path d="M1.5 13.5H28.5M1.5 20.5H28.5M8.5 6.5V27.5M21.5 6.5V27.5" stroke="#424242" stroke-width="1"/>
<rect x="8.5" y="13.5" width="13" height="7" fill="#8cc0ee" stroke="#1f78d1" stroke-width="1.1"/>
</svg>
<div style="position:absolute;left:1307.56px;top:122.00px;font:normal normal 13.04px/13.04px 'Liberation Sans', sans-serif;color:#242424;white-space:pre;transform:scaleX(0.9362);transform-origin:0 0;-webkit-text-stroke:0.1px #242424;">Formato</div>
<svg style="position:absolute;left:1326px;top:141px;" width="8" height="5.0" viewBox="0 0 8 5.0"><path d="M1 1L4.0 4.0L7 1" fill="none" stroke="#424242" stroke-width="1.1"/></svg>
<div style="position:absolute;left:1269.66px;top:163.00px;font:normal normal 11.59px/11.59px 'Liberation Sans', sans-serif;color:#242424;white-space:pre;transform:scaleX(0.9360);transform-origin:0 0;-webkit-text-stroke:0.1px #242424;">Celle</div>
<div style="position:absolute;left:1363px;top:84px;width:1px;height:88px;background:#d1d1d1;"></div>
<svg style="position:absolute;left:0;top:0" width="1400" height="160">
<path d="M1390 89.3V87.3H1378.6L1384.7 93.9L1378.6 100.5H1390V98.5" fill="none" stroke="#303030" stroke-width="1.1" stroke-linejoin="miter"/>
</svg>
<div style="position:absolute;left:1395.07px;top:88.00px;font:normal normal 13.04px/13.04px 'Liberation Sans', sans-serif;color:#242424;white-space:pre;transform:scaleX(0.9324);transform-origin:0 0;-webkit-text-stroke:0.1px #242424;">Somma automatica</div>
<svg style="position:absolute;left:1511px;top:92px;" width="8" height="5.0" viewBox="0 0 8 5.0"><path d="M1 1L4.0 4.0L7 1" fill="none" stroke="#424242" stroke-width="1.1"/></svg>
<svg style="position:absolute;left:0;top:0" width="1400" height="160">
<rect x="1376.5" y="113.5" width="15" height="13" fill="#fafafa" stroke="#303030" stroke-width="1"/>
<path d="M1376.5 115.5H1391.5" stroke="#303030" stroke-width="1"/>
<path d="M1383.5 117.3V124.8M1380.3 121.6L1383.5 124.8L1386.7 121.6" fill="none" stroke="#1f87d6" stroke-width="1.2" stroke-linecap="round" stroke-linejoin="round"/>
</svg>
<div style="position:absolute;left:1395.05px;top:114.00px;font:normal normal 13.04px/13.04px 'Liberation Sans', sans-serif;color:#242424;white-space:pre;transform:scaleX(0.9467);transform-origin:0 0;-webkit-text-stroke:0.1px #242424;">Riempimento</div>
<svg style="position:absolute;left:1471px;top:118px;" width="7" height="4.5" viewBox="0 0 7 4.5"><path d="M1 1L3.5 3.5L6 1" fill="none" stroke="#424242" stroke-width="1.1"/></svg>
<svg style="position:absolute;left:0;top:0" width="1400" height="160">
<path d="M1385.7 138.9L1390.6 143.7L1381.4 153L1376.6 148.1Z" fill="#fafafa" stroke="#a133b7" stroke-width="1.2" stroke-linejoin="round"/>
<path d="M1380.3 144.4L1385 149.3L1381.4 153L1376.6 148.1Z" fill="#d68fe3" stroke="#a133b7" stroke-width="1.2" stroke-linejoin="round"/>
</svg>
<div style="position:absolute;left:1395.11px;top:140.00px;font:normal normal 13.04px/13.04px 'Liberation Sans', sans-serif;color:#242424;white-space:pre;transform:scaleX(0.8900);transform-origin:0 0;-webkit-text-stroke:0.1px #242424;">Cancella</div>
<svg style="position:absolute;left:1444px;top:144px;" width="7" height="4.5" viewBox="0 0 7 4.5"><path d="M1 1L3.5 3.5L6 1" fill="none" stroke="#424242" stroke-width="1.1"/></svg>
<div style="position:absolute;left:1538.00px;top:87.00px;font:normal normal 15.94px/15.94px 'Liberation Sans', sans-serif;color:#1f78d1;white-space:pre;transform:scaleX(0.9545);transform-origin:0 0;-webkit-text-stroke:0.1px #1f78d1;">A</div>
<div style="position:absolute;left:1538.50px;top:101.00px;font:normal normal 15.94px/15.94px 'Liberation Sans', sans-serif;color:#424242;white-space:pre;transform:scaleX(1.0556);transform-origin:0 0;-webkit-text-stroke:0.1px #424242;">Z</div>
<svg style="position:absolute;left:1549px;top:93px;" width="19" height="18" viewBox="0 0 19 18"><path d="M1 1.5H17L11 8.5V17H7V8.5Z" fill="#fff" stroke="#424242" stroke-width="1.2" stroke-linejoin="round"/></svg>
<div style="position:absolute;left:1528.59px;top:122.00px;font:normal normal 13.04px/13.04px 'Liberation Sans', sans-serif;color:#242424;white-space:pre;transform:scaleX(0.9082);transform-origin:0 0;-webkit-text-stroke:0.1px #242424;">Ordina e</div>
<div style="position:absolute;left:1534.00px;top:138.00px;font:normal normal 13.04px/13.04px 'Liberation Sans', sans-serif;color:#242424;white-space:pre;transform:scaleX(0.9200);transform-origin:0 0;-webkit-text-stroke:0.1px #242424;">filtra</div>
<svg style="position:absolute;left:1561px;top:143px;" width="7" height="4.5" viewBox="0 0 7 4.5"><path d="M1 1L3.5 3.5L6 1" fill="none" stroke="#424242" stroke-width="1.1"/></svg>
<svg style="position:absolute;left:1595px;top:86px;" width="32" height="32" viewBox="0 0 32 32"><circle cx="20" cy="10.5" r="9.8" fill="#fff" stroke="#424242" stroke-width="1.2"/><path d="M13 17.5L1 29.5" stroke="#424242" stroke-width="1.3"/></svg>
<div style="position:absolute;left:1592.00px;top:122.00px;font:normal normal 13.04px/13.04px 'Liberation Sans', sans-serif;color:#242424;white-space:pre;transform:scaleX(0.8837);transform-origin:0 0;-webkit-text-stroke:0.1px #242424;">Trova e</div>
<div style="position:absolute;left:1580.13px;top:138.00px;font:normal normal 13.04px/13.04px 'Liberation Sans', sans-serif;color:#242424;white-space:pre;transform:scaleX(0.8704);transform-origin:0 0;-webkit-text-stroke:0.1px #242424;">seleziona</div>
<svg style="position:absolute;left:1632px;top:143px;" width="7" height="4.5" viewBox="0 0 7 4.5"><path d="M1 1L3.5 3.5L6 1" fill="none" stroke="#424242" stroke-width="1.1"/></svg>
<div style="position:absolute;left:1482.95px;top:163.00px;font:normal normal 11.59px/11.59px 'Liberation Sans', sans-serif;color:#242424;white-space:pre;transform:scaleX(1.0476);transform-origin:0 0;-webkit-text-stroke:0.1px #242424;">Modifica</div>
<div style="position:absolute;left:1650px;top:84px;width:1px;height:88px;background:#d1d1d1;"></div>
<svg style="position:absolute;left:0;top:0" width="1920" height="180">
<path d="M1693 87.5H1682.5V114.5H1702.5V102" fill="#efefef" stroke="#b5b5b5" stroke-width="1.1"/>
<rect x="1682.5" y="95" width="20" height="19.5" fill="#efefef"/>
<path d="M1682.5 95V114.5H1702.5V102" fill="none" stroke="#b5b5b5" stroke-width="1.1"/>
<g transform="translate(1692.8 101.7) rotate(-45)">
<rect x="-3.6" y="-8" width="24" height="16" fill="#fff"/>
<rect x="-2.6" y="-6.8" width="5.2" height="13.6" fill="#efefef" stroke="#a8a8a8" stroke-width="1.1"/>
<rect x="-0.9" y="-4.6" width="1.8" height="9.2" fill="none" stroke="#a8a8a8" stroke-width="0.9"/>
<rect x="4.5" y="-6.8" width="6.5" height="13.6" fill="#ececec" stroke="#a8a8a8" stroke-width="1"/>
<rect x="5.2" y="-6.2" width="3.2" height="12.4" fill="#a9a9a9"/>
<path d="M11 -5.5H17.5V1.5H11" fill="#ececec" stroke="#a8a8a8" stroke-width="1"/>
</g></svg>
<div style="position:absolute;left:1660.15px;top:122.00px;font:normal normal 13.04px/13.04px 'Liberation Sans', sans-serif;color:#a6a6a6;white-space:pre;transform:scaleX(0.8514);transform-origin:0 0;-webkit-text-stroke:0.1px #a6a6a6;">Riservatezza</div>
<svg style="position:absolute;left:1689px;top:141px;" width="7" height="4.5" viewBox="0 0 7 4.5"><path d="M1 1L3.5 3.5L6 1" fill="none" stroke="#b0b0b0" stroke-width="1.1"/></svg>
<div style="position:absolute;left:1660.08px;top:163.00px;font:normal normal 11.59px/11.59px 'Liberation Sans', sans-serif;color:#242424;white-space:pre;transform:scaleX(0.9242);transform-origin:0 0;-webkit-text-stroke:0.1px #242424;">Riservatezza</div>
<div style="position:absolute;left:1734px;top:84px;width:1px;height:88px;background:#d1d1d1;"></div>
<svg style="position:absolute;left:0;top:0" width="1920" height="180">
<path d="M1776.5 112.4H1769.2Q1767.2 112.4 1767.2 110.4V90.8Q1767.2 88.8 1769.2 88.8H1781.3L1785.8 93.3V101.4" fill="none" stroke="#2a62d9" stroke-width="1.3"/>
<path d="M1776 94V100.5L1771 104.3M1776 100.5L1782 101.8" fill="none" stroke="#2a62d9" stroke-width="0.9"/>
<path d="M1774.5 93.5L1776 91.8L1777.5 93.5M1770 103.2L1770.5 105.5L1772.5 104.8M1781 100.3L1782.8 101.8L1781 103" fill="none" stroke="#2a62d9" stroke-width="0.7"/>
<g transform="translate(1785 109.5) rotate(-45)">
<rect x="-9.5" y="-2.6" width="10" height="5.2" rx="2.6" fill="none" stroke="#fff" stroke-width="3"/>
<rect x="-9.5" y="-2.6" width="10" height="5.2" rx="2.6" fill="none" stroke="#2a62d9" stroke-width="1.3"/>
<rect x="-0.5" y="-2.6" width="10" height="5.2" rx="2.6" fill="none" stroke="#fff" stroke-width="3"/>
<rect x="-0.5" y="-2.6" width="10" height="5.2" rx="2.6" fill="none" stroke="#2a62d9" stroke-width="1.3"/>
</g></svg>
<div style="position:absolute;left:1763.11px;top:122.00px;font:normal normal 13.04px/13.04px 'Liberation Sans', sans-serif;color:#242424;white-space:pre;transform:scaleX(0.8889);transform-origin:0 0;-webkit-text-stroke:0.1px #242424;">Crea</div>
<div style="position:absolute;left:1756.12px;top:138.00px;font:normal normal 13.04px/13.04px 'Liberation Sans', sans-serif;color:#242424;white-space:pre;transform:scaleX(0.8837);transform-origin:0 0;-webkit-text-stroke:0.1px #242424;">un PDF</div>
<div style="position:absolute;left:1738.00px;top:163.00px;font:normal normal 11.59px/11.59px 'Liberation Sans', sans-serif;color:#242424;white-space:pre;transform:scaleX(1.0132);transform-origin:0 0;-webkit-text-stroke:0.1px #242424;">Adobe Acrobat</div>
<div style="position:absolute;left:1818px;top:84px;width:1px;height:88px;background:#d1d1d1;"></div>
<svg style="position:absolute;left:1892px;top:161px;" width="12" height="7" viewBox="0 0 12 7"><path d="M1 1L5.5 5.5L10 1" fill="none" stroke="#424242" stroke-width="1.2"/></svg>
<div style="position:absolute;left:9px;top:187px;width:101px;height:25px;box-sizing:border-box;background:#fff;border:1px solid #d4d4d4;border-radius:4px;"></div>
<div style="position:absolute;left:130px;top:187px;width:74px;height:25px;box-sizing:border-box;background:#fff;border:1px solid #d4d4d4;border-radius:4px;"></div>
<div style="position:absolute;left:208px;top:186px;width:1704px;height:66px;box-sizing:border-box;background:#fff;border:1px solid #d4d4d4;border-radius:6px;"></div>
<div style="position:absolute;left:26px;top:279px;width:1872px;height:699px;background:#fff;"></div>
<svg style="position:absolute;left:0;top:0" width="1920" height="1080" shape-rendering="crispEdges"><rect x="115" y="279" width="1" height="699" fill="#e1e1e1"/><rect x="231" y="279" width="1" height="699" fill="#e1e1e1"/><rect x="360" y="279" width="1" height="699" fill="#e1e1e1"/><rect x="401" y="279" width="1" height="699" fill="#e1e1e1"/><rect x="481" y="279" width="1" height="699" fill="#e1e1e1"/><rect x="555" y="279" width="1" height="699" fill="#e1e1e1"/><rect x="770" y="279" width="1" height="699" fill="#e1e1e1"/><rect x="834" y="279" width="1" height="699" fill="#e1e1e1"/><rect x="898" y="279" width="1" height="699" fill="#e1e1e1"/><rect x="962" y="279" width="1" height="699" fill="#e1e1e1"/><rect x="1026" y="279" width="1" height="699" fill="#e1e1e1"/><rect x="1090" y="279" width="1" height="699" fill="#e1e1e1"/><rect x="1154" y="279" width="1" height="699" fill="#e1e1e1"/><rect x="1218" y="279" width="1" height="699" fill="#e1e1e1"/><rect x="1282" y="279" width="1" height="699" fill="#e1e1e1"/><rect x="1346" y="279" width="1" height="699" fill="#e1e1e1"/><rect x="1410" y="279" width="1" height="699" fill="#e1e1e1"/><rect x="1474" y="279" width="1" height="699" fill="#e1e1e1"/><rect x="1538" y="279" width="1" height="699" fill="#e1e1e1"/><rect x="1602" y="279" width="1" height="699" fill="#e1e1e1"/><rect x="1666" y="279" width="1" height="699" fill="#e1e1e1"/><rect x="1730" y="279" width="1" height="699" fill="#e1e1e1"/><rect x="1794" y="279" width="1" height="699" fill="#e1e1e1"/><rect x="1858" y="279" width="1" height="699" fill="#e1e1e1"/><rect x="26" y="297" width="1872" height="1" fill="#e1e1e1"/><rect x="26" y="316" width="1872" height="1" fill="#e1e1e1"/><rect x="26" y="335" width="1872" height="1" fill="#e1e1e1"/><rect x="26" y="354" width="1872" height="1" fill="#e1e1e1"/><rect x="26" y="373" width="1872" height="1" fill="#e1e1e1"/><rect x="26" y="392" width="1872" height="1" fill="#e1e1e1"/><rect x="26" y="411" width="1872" height="1" fill="#e1e1e1"/><rect x="26" y="430" width="1872" height="1" fill="#e1e1e1"/><rect x="26" y="449" width="1872" height="1" fill="#e1e1e1"/><rect x="26" y="468" width="1872" height="1" fill="#e1e1e1"/><rect x="26" y="487" width="1872" height="1" fill="#e1e1e1"/><rect x="26" y="506" width="1872" height="1" fill="#e1e1e1"/><rect x="26" y="525" width="1872" height="1" fill="#e1e1e1"/><rect x="26" y="544" width="1872" height="1" fill="#e1e1e1"/><rect x="26" y="563" width="1872" height="1" fill="#e1e1e1"/><rect x="26" y="582" width="1872" height="1" fill="#e1e1e1"/><rect x="26" y="601" width="1872" height="1" fill="#e1e1e1"/><rect x="26" y="620" width="1872" height="1" fill="#e1e1e1"/><rect x="26" y="639" width="1872" height="1" fill="#e1e1e1"/><rect x="26" y="658" width="1872" height="1" fill="#e1e1e1"/><rect x="26" y="677" width="1872" height="1" fill="#e1e1e1"/><rect x="26" y="696" width="1872" height="1" fill="#e1e1e1"/><rect x="26" y="715" width="1872" height="1" fill="#e1e1e1"/><rect x="26" y="734" width="1872" height="1" fill="#e1e1e1"/><rect x="26" y="753" width="1872" height="1" fill="#e1e1e1"/><rect x="26" y="772" width="1872" height="1" fill="#e1e1e1"/><rect x="26" y="791" width="1872" height="1" fill="#e1e1e1"/><rect x="26" y="810" width="1872" height="1" fill="#e1e1e1"/><rect x="26" y="829" width="1872" height="1" fill="#e1e1e1"/><rect x="26" y="848" width="1872" height="1" fill="#e1e1e1"/><rect x="26" y="867" width="1872" height="1" fill="#e1e1e1"/><rect x="26" y="886" width="1872" height="1" fill="#e1e1e1"/><rect x="26" y="905" width="1872" height="1" fill="#e1e1e1"/><rect x="26" y="924" width="1872" height="1" fill="#e1e1e1"/><rect x="26" y="943" width="1872" height="1" fill="#e1e1e1"/><rect x="26" y="962" width="1872" height="1" fill="#e1e1e1"/><rect x="115" y="259" width="1" height="19" fill="#c2c2c2"/><rect x="231" y="259" width="1" height="19" fill="#c2c2c2"/><rect x="360" y="259" width="1" height="19" fill="#c2c2c2"/><rect x="401" y="259" width="1" height="19" fill="#c2c2c2"/><rect x="481" y="259" width="1" height="19" fill="#c2c2c2"/><rect x="555" y="259" width="1" height="19" fill="#c2c2c2"/><rect x="770" y="259" width="1" height="19" fill="#c2c2c2"/><rect x="834" y="259" width="1" height="19" fill="#c2c2c2"/><rect x="898" y="259" width="1" height="19" fill="#c2c2c2"/><rect x="962" y="259" width="1" height="19" fill="#c2c2c2"/><rect x="1026" y="259" width="1" height="19" fill="#c2c2c2"/><rect x="1090" y="259" width="1" height="19" fill="#c2c2c2"/><rect x="1154" y="259" width="1" height="19" fill="#c2c2c2"/><rect x="1218" y="259" width="1" height="19" fill="#c2c2c2"/><rect x="1282" y="259" width="1" height="19" fill="#c2c2c2"/><rect x="1346" y="259" width="1" height="19" fill="#c2c2c2"/><rect x="1410" y="259" width="1" height="19" fill="#c2c2c2"/><rect x="1474" y="259" width="1" height="19" fill="#c2c2c2"/><rect x="1538" y="259" width="1" height="19" fill="#c2c2c2"/><rect x="1602" y="259" width="1" height="19" fill="#c2c2c2"/><rect x="1666" y="259" width="1" height="19" fill="#c2c2c2"/><rect x="1730" y="259" width="1" height="19" fill="#c2c2c2"/><rect x="1794" y="259" width="1" height="19" fill="#c2c2c2"/><rect x="1858" y="259" width="1" height="19" fill="#c2c2c2"/><rect x="0" y="297" width="25" height="1" fill="#c8c8c8"/><rect x="0" y="316" width="25" height="1" fill="#c8c8c8"/><rect x="0" y="335" width="25" height="1" fill="#c8c8c8"/><rect x="0" y="354" width="25" height="1" fill="#c8c8c8"/><rect x="0" y="373" width="25" height="1" fill="#c8c8c8"/><rect x="0" y="392" width="25" height="1" fill="#c8c8c8"/><rect x="0" y="411" width="25" height="1" fill="#c8c8c8"/><rect x="0" y="430" width="25" height="1" fill="#c8c8c8"/><rect x="0" y="449" width="25" height="1" fill="#c8c8c8"/><rect x="0" y="468" width="25" height="1" fill="#c8c8c8"/><rect x="0" y="487" width="25" height="1" fill="#c8c8c8"/><rect x="0" y="506" width="25" height="1" fill="#c8c8c8"/><rect x="0" y="525" width="25" height="1" fill="#c8c8c8"/><rect x="0" y="544" width="25" height="1" fill="#c8c8c8"/><rect x="0" y="563" width="25" height="1" fill="#c8c8c8"/><rect x="0" y="582" width="25" height="1" fill="#c8c8c8"/><rect x="0" y="601" width="25" height="1" fill="#c8c8c8"/><rect x="0" y="620" width="25" height="1" fill="#c8c8c8"/><rect x="0" y="639" width="25" height="1" fill="#c8c8c8"/><rect x="0" y="658" width="25" height="1" fill="#c8c8c8"/><rect x="0" y="677" width="25" height="1" fill="#c8c8c8"/><rect x="0" y="696" width="25" height="1" fill="#c8c8c8"/><rect x="0" y="715" width="25" height="1" fill="#c8c8c8"/><rect x="0" y="734" width="25" height="1" fill="#c8c8c8"/><rect x="0" y="753" width="25" height="1" fill="#c8c8c8"/><rect x="0" y="772" width="25" height="1" fill="#c8c8c8"/><rect x="0" y="791" width="25" height="1" fill="#c8c8c8"/><rect x="0" y="810" width="25" height="1" fill="#c8c8c8"/><rect x="0" y="829" width="25" height="1" fill="#c8c8c8"/><rect x="0" y="848" width="25" height="1" fill="#c8c8c8"/><rect x="0" y="867" width="25" height="1" fill="#c8c8c8"/><rect x="0" y="886" width="25" height="1" fill="#c8c8c8"/><rect x="0" y="905" width="25" height="1" fill="#c8c8c8"/><rect x="0" y="924" width="25" height="1" fill="#c8c8c8"/><rect x="0" y="943" width="25" height="1" fill="#c8c8c8"/><rect x="0" y="962" width="25" height="1" fill="#c8c8c8"/><rect x="1026" y="259" width="64" height="19" fill="#d3d3d3"/><rect x="0" y="449" width="25" height="19" fill="#d3d3d3"/><rect x="0" y="278" width="1898" height="1" fill="#a6a6a6"/><rect x="25" y="259" width="1" height="719" fill="#a6a6a6"/><rect x="1026" y="277" width="65" height="2" fill="#107c41"/><rect x="24" y="449" width="2" height="20" fill="#107c41"/><rect x="26" y="297" width="745" height="1" fill="#000"/><rect x="115" y="279" width="1" height="19" fill="#000"/><rect x="231" y="279" width="1" height="19" fill="#000"/><rect x="360" y="279" width="1" height="19" fill="#000"/><rect x="401" y="279" width="1" height="19" fill="#000"/><rect x="481" y="279" width="1" height="19" fill="#000"/><rect x="555" y="279" width="1" height="19" fill="#000"/><rect x="770" y="279" width="1" height="19" fill="#000"/><path d="M22.5 263.5V275.5H10.5Z" fill="#b7b7b7" shape-rendering="geometricPrecision"/><rect x="1025" y="448" width="67" height="2" fill="#107c41"/><rect x="1025" y="468" width="62" height="2" fill="#107c41"/><rect x="1025" y="448" width="2" height="22" fill="#107c41"/><rect x="1090" y="448" width="2" height="9" fill="#107c41"/><rect x="1088" y="466" width="2" height="5" fill="#107c41"/></svg>
<div style="position:absolute;left:66.50px;top:263.00px;font:normal normal 12.61px/12.61px 'Liberation Sans', sans-serif;color:#242424;white-space:pre;-webkit-text-stroke:0.1px #242424;">A</div>
<div style="position:absolute;left:169.00px;top:263.00px;font:normal normal 12.61px/12.61px 'Liberation Sans', sans-serif;color:#242424;white-space:pre;-webkit-text-stroke:0.1px #242424;">B</div>
<div style="position:absolute;left:291.50px;top:263.00px;font:normal normal 12.61px/12.61px 'Liberation Sans', sans-serif;color:#242424;white-space:pre;-webkit-text-stroke:0.1px #242424;">C</div>
<div style="position:absolute;left:376.00px;top:263.00px;font:normal normal 12.61px/12.61px 'Liberation Sans', sans-serif;color:#242424;white-space:pre;-webkit-text-stroke:0.1px #242424;">D</div>
<div style="position:absolute;left:437.00px;top:263.00px;font:normal normal 12.61px/12.61px 'Liberation Sans', sans-serif;color:#242424;white-space:pre;-webkit-text-stroke:0.1px #242424;">E</div>
<div style="position:absolute;left:514.50px;top:263.00px;font:normal normal 12.61px/12.61px 'Liberation Sans', sans-serif;color:#242424;white-space:pre;-webkit-text-stroke:0.1px #242424;">F</div>
<div style="position:absolute;left:658.00px;top:263.00px;font:normal normal 12.61px/12.61px 'Liberation Sans', sans-serif;color:#242424;white-space:pre;-webkit-text-stroke:0.1px #242424;">G</div>
<div style="position:absolute;left:798.00px;top:263.00px;font:normal normal 12.61px/12.61px 'Liberation Sans', sans-serif;color:#242424;white-space:pre;-webkit-text-stroke:0.1px #242424;">H</div>
<div style="position:absolute;left:864.50px;top:263.00px;font:normal normal 12.61px/12.61px 'Liberation Sans', sans-serif;color:#242424;white-space:pre;-webkit-text-stroke:0.1px #242424;">I</div>
<div style="position:absolute;left:927.50px;top:263.00px;font:normal normal 12.61px/12.61px 'Liberation Sans', sans-serif;color:#242424;white-space:pre;-webkit-text-stroke:0.1px #242424;">J</div>
<div style="position:absolute;left:990.00px;top:263.00px;font:normal normal 12.61px/12.61px 'Liberation Sans', sans-serif;color:#242424;white-space:pre;-webkit-text-stroke:0.1px #242424;">K</div>
<div style="position:absolute;left:1054.50px;top:263.00px;font:normal normal 12.61px/12.61px 'Liberation Sans', sans-serif;color:#1d6b3d;white-space:pre;-webkit-text-stroke:0.1px #1d6b3d;">L</div>
<div style="position:absolute;left:1117.00px;top:263.00px;font:normal normal 12.61px/12.61px 'Liberation Sans', sans-serif;color:#242424;white-space:pre;-webkit-text-stroke:0.1px #242424;">M</div>
<div style="position:absolute;left:1182.00px;top:263.00px;font:normal normal 12.61px/12.61px 'Liberation Sans', sans-serif;color:#242424;white-space:pre;-webkit-text-stroke:0.1px #242424;">N</div>
<div style="position:absolute;left:1245.50px;top:263.00px;font:normal normal 12.61px/12.61px 'Liberation Sans', sans-serif;color:#242424;white-space:pre;-webkit-text-stroke:0.1px #242424;">O</div>
<div style="position:absolute;left:1310.00px;top:263.00px;font:normal normal 12.61px/12.61px 'Liberation Sans', sans-serif;color:#242424;white-space:pre;-webkit-text-stroke:0.1px #242424;">P</div>
<div style="position:absolute;left:1373.50px;top:263.00px;font:normal normal 12.61px/12.61px 'Liberation Sans', sans-serif;color:#242424;white-space:pre;-webkit-text-stroke:0.1px #242424;">Q</div>
<div style="position:absolute;left:1438.00px;top:263.00px;font:normal normal 12.61px/12.61px 'Liberation Sans', sans-serif;color:#242424;white-space:pre;-webkit-text-stroke:0.1px #242424;">R</div>
<div style="position:absolute;left:1502.00px;top:263.00px;font:normal normal 12.61px/12.61px 'Liberation Sans', sans-serif;color:#242424;white-space:pre;-webkit-text-stroke:0.1px #242424;">S</div>
<div style="position:absolute;left:1566.50px;top:263.00px;font:normal normal 12.61px/12.61px 'Liberation Sans', sans-serif;color:#242424;white-space:pre;-webkit-text-stroke:0.1px #242424;">T</div>
<div style="position:absolute;left:1630.00px;top:263.00px;font:normal normal 12.61px/12.61px 'Liberation Sans', sans-serif;color:#242424;white-space:pre;-webkit-text-stroke:0.1px #242424;">U</div>
<div style="position:absolute;left:1694.50px;top:263.00px;font:normal normal 12.61px/12.61px 'Liberation Sans', sans-serif;color:#242424;white-space:pre;-webkit-text-stroke:0.1px #242424;">V</div>
<div style="position:absolute;left:1756.50px;top:263.00px;font:normal normal 12.61px/12.61px 'Liberation Sans', sans-serif;color:#242424;white-space:pre;-webkit-text-stroke:0.1px #242424;">W</div>
<div style="position:absolute;left:1822.00px;top:263.00px;font:normal normal 12.61px/12.61px 'Liberation Sans', sans-serif;color:#242424;white-space:pre;-webkit-text-stroke:0.1px #242424;">X</div>
<div style="position:absolute;left:1886.00px;top:263.00px;font:normal normal 12.61px/12.61px 'Liberation Sans', sans-serif;color:#242424;white-space:pre;-webkit-text-stroke:0.1px #242424;">Y</div>
<div style="position:absolute;left:9.00px;top:283.00px;font:normal normal 12.75px/12.75px 'Liberation Sans', sans-serif;color:#242424;white-space:pre;-webkit-text-stroke:0.1px #242424;">1</div>
<div style="position:absolute;left:9.00px;top:302.00px;font:normal normal 12.75px/12.75px 'Liberation Sans', sans-serif;color:#242424;white-space:pre;-webkit-text-stroke:0.1px #242424;">2</div>
<div style="position:absolute;left:9.00px;top:321.00px;font:normal normal 12.75px/12.75px 'Liberation Sans', sans-serif;color:#242424;white-space:pre;-webkit-text-stroke:0.1px #242424;">3</div>
<div style="position:absolute;left:9.50px;top:340.00px;font:normal normal 12.75px/12.75px 'Liberation Sans', sans-serif;color:#242424;white-space:pre;-webkit-text-stroke:0.1px #242424;">4</div>
<div style="position:absolute;left:9.00px;top:359.00px;font:normal normal 12.75px/12.75px 'Liberation Sans', sans-serif;color:#242424;white-space:pre;-webkit-text-stroke:0.1px #242424;">5</div>
<div style="position:absolute;left:9.00px;top:378.00px;font:normal normal 12.75px/12.75px 'Liberation Sans', sans-serif;color:#242424;white-space:pre;-webkit-text-stroke:0.1px #242424;">6</div>
<div style="position:absolute;left:9.00px;top:397.00px;font:normal normal 12.75px/12.75px 'Liberation Sans', sans-serif;color:#242424;white-space:pre;-webkit-text-stroke:0.1px #242424;">7</div>
<div style="position:absolute;left:9.00px;top:416.00px;font:normal normal 12.75px/12.75px 'Liberation Sans', sans-serif;color:#242424;white-space:pre;-webkit-text-stroke:0.1px #242424;">8</div>
<div style="position:absolute;left:9.00px;top:435.00px;font:normal normal 12.75px/12.75px 'Liberation Sans', sans-serif;color:#242424;white-space:pre;-webkit-text-stroke:0.1px #242424;">9</div>
<div style="position:absolute;left:5.50px;top:454.00px;font:normal normal 12.75px/12.75px 'Liberation Sans', sans-serif;color:#1d6b3d;white-space:pre;-webkit-text-stroke:0.1px #1d6b3d;">10</div>
<div style="position:absolute;left:6.00px;top:473.00px;font:normal normal 12.75px/12.75px 'Liberation Sans', sans-serif;color:#242424;white-space:pre;-webkit-text-stroke:0.1px #242424;">11</div>
<div style="position:absolute;left:5.50px;top:492.00px;font:normal normal 12.75px/12.75px 'Liberation Sans', sans-serif;color:#242424;white-space:pre;-webkit-text-stroke:0.1px #242424;">12</div>
<div style="position:absolute;left:5.50px;top:511.00px;font:normal normal 12.75px/12.75px 'Liberation Sans', sans-serif;color:#242424;white-space:pre;-webkit-text-stroke:0.1px #242424;">13</div>
<div style="position:absolute;left:5.50px;top:530.00px;font:normal normal 12.75px/12.75px 'Liberation Sans', sans-serif;color:#242424;white-space:pre;-webkit-text-stroke:0.1px #242424;">14</div>
<div style="position:absolute;left:5.50px;top:549.00px;font:normal normal 12.75px/12.75px 'Liberation Sans', sans-serif;color:#242424;white-space:pre;-webkit-text-stroke:0.1px #242424;">15</div>
<div style="position:absolute;left:5.50px;top:568.00px;font:normal normal 12.75px/12.75px 'Liberation Sans', sans-serif;color:#242424;white-space:pre;-webkit-text-stroke:0.1px #242424;">16</div>
<div style="position:absolute;left:5.50px;top:587.00px;font:normal normal 12.75px/12.75px 'Liberation Sans', sans-serif;color:#242424;white-space:pre;-webkit-text-stroke:0.1px #242424;">17</div>
<div style="position:absolute;left:5.50px;top:606.00px;font:normal normal 12.75px/12.75px 'Liberation Sans', sans-serif;color:#242424;white-space:pre;-webkit-text-stroke:0.1px #242424;">18</div>
<div style="position:absolute;left:5.50px;top:625.00px;font:normal normal 12.75px/12.75px 'Liberation Sans', sans-serif;color:#242424;white-space:pre;-webkit-text-stroke:0.1px #242424;">19</div>
<div style="position:absolute;left:5.50px;top:644.00px;font:normal normal 12.75px/12.75px 'Liberation Sans', sans-serif;color:#242424;white-space:pre;-webkit-text-stroke:0.1px #242424;">20</div>
<div style="position:absolute;left:5.50px;top:663.00px;font:normal normal 12.75px/12.75px 'Liberation Sans', sans-serif;color:#242424;white-space:pre;-webkit-text-stroke:0.1px #242424;">21</div>
<div style="position:absolute;left:5.50px;top:682.00px;font:normal normal 12.75px/12.75px 'Liberation Sans', sans-serif;color:#242424;white-space:pre;-webkit-text-stroke:0.1px #242424;">22</div>
<div style="position:absolute;left:5.50px;top:701.00px;font:normal normal 12.75px/12.75px 'Liberation Sans', sans-serif;color:#242424;white-space:pre;-webkit-text-stroke:0.1px #242424;">23</div>
<div style="position:absolute;left:5.50px;top:720.00px;font:normal normal 12.75px/12.75px 'Liberation Sans', sans-serif;color:#242424;white-space:pre;-webkit-text-stroke:0.1px #242424;">24</div>
<div style="position:absolute;left:5.50px;top:739.00px;font:normal normal 12.75px/12.75px 'Liberation Sans', sans-serif;color:#242424;white-space:pre;-webkit-text-stroke:0.1px #242424;">25</div>
<div style="position:absolute;left:5.50px;top:758.00px;font:normal normal 12.75px/12.75px 'Liberation Sans', sans-serif;color:#242424;white-space:pre;-webkit-text-stroke:0.1px #242424;">26</div>
<div style="position:absolute;left:5.50px;top:777.00px;font:normal normal 12.75px/12.75px 'Liberation Sans', sans-serif;color:#242424;white-space:pre;-webkit-text-stroke:0.1px #242424;">27</div>
<div style="position:absolute;left:5.50px;top:796.00px;font:normal normal 12.75px/12.75px 'Liberation Sans', sans-serif;color:#242424;white-space:pre;-webkit-text-stroke:0.1px #242424;">28</div>
<div style="position:absolute;left:5.50px;top:815.00px;font:normal normal 12.75px/12.75px 'Liberation Sans', sans-serif;color:#242424;white-space:pre;-webkit-text-stroke:0.1px #242424;">29</div>
<div style="position:absolute;left:5.50px;top:834.00px;font:normal normal 12.75px/12.75px 'Liberation Sans', sans-serif;color:#242424;white-space:pre;-webkit-text-stroke:0.1px #242424;">30</div>
<div style="position:absolute;left:5.50px;top:853.00px;font:normal normal 12.75px/12.75px 'Liberation Sans', sans-serif;color:#242424;white-space:pre;-webkit-text-stroke:0.1px #242424;">31</div>
<div style="position:absolute;left:5.50px;top:872.00px;font:normal normal 12.75px/12.75px 'Liberation Sans', sans-serif;color:#242424;white-space:pre;-webkit-text-stroke:0.1px #242424;">32</div>
<div style="position:absolute;left:5.50px;top:891.00px;font:normal normal 12.75px/12.75px 'Liberation Sans', sans-serif;color:#242424;white-space:pre;-webkit-text-stroke:0.1px #242424;">33</div>
<div style="position:absolute;left:5.50px;top:910.00px;font:normal normal 12.75px/12.75px 'Liberation Sans', sans-serif;color:#242424;white-space:pre;-webkit-text-stroke:0.1px #242424;">34</div>
<div style="position:absolute;left:5.50px;top:929.00px;font:normal normal 12.75px/12.75px 'Liberation Sans', sans-serif;color:#242424;white-space:pre;-webkit-text-stroke:0.1px #242424;">35</div>
<div style="position:absolute;left:5.50px;top:948.00px;font:normal normal 12.75px/12.75px 'Liberation Sans', sans-serif;color:#242424;white-space:pre;-webkit-text-stroke:0.1px #242424;">36</div>
<div style="position:absolute;left:5.50px;top:967.00px;font:normal normal 12.75px/12.75px 'Liberation Sans', sans-serif;color:#242424;white-space:pre;-webkit-text-stroke:0.1px #242424;">37</div>
<div style="position:absolute;left:29.50px;top:283.00px;font:normal bold 13.04px/13.04px 'Liberation Sans', sans-serif;color:#000;white-space:pre;transform:scaleX(0.9270);transform-origin:0 0;">GROUP CODE</div>
<div style="position:absolute;left:119.06px;top:283.00px;font:normal bold 13.04px/13.04px 'Liberation Sans', sans-serif;color:#000;white-space:pre;transform:scaleX(0.9391);transform-origin:0 0;">SUBGROUP CODE</div>
<div style="position:absolute;left:236.50px;top:283.00px;font:normal bold 13.04px/13.04px 'Liberation Sans', sans-serif;color:#000;white-space:pre;transform:scaleX(0.9484);transform-origin:0 0;">COMPONENT CODE</div>
<div style="position:absolute;left:364.50px;top:283.00px;font:normal bold 13.04px/13.04px 'Liberation Sans', sans-serif;color:#000;white-space:pre;transform:scaleX(0.9054);transform-origin:0 0;">CODE</div>
<div style="position:absolute;left:404.59px;top:283.00px;font:normal bold 13.04px/13.04px 'Liberation Sans', sans-serif;color:#000;white-space:pre;transform:scaleX(0.9062);transform-origin:0 0;">PERSONNEL</div>
<div style="position:absolute;left:484.50px;top:283.00px;font:normal bold 13.04px/13.04px 'Liberation Sans', sans-serif;color:#000;white-space:pre;">DURATION</div>
<div style="position:absolute;left:561.54px;top:283.00px;font:normal bold 13.04px/13.04px 'Liberation Sans', sans-serif;color:#000;white-space:pre;transform:scaleX(0.9619);transform-origin:0 0;">MAINTENANCE STATE FUNCTION</div>
<div style="position:absolute;left:1086px;top:463px;width:12px;height:2px;background:#000;"></div>
<div style="position:absolute;left:1091px;top:458px;width:2px;height:12px;background:#000;"></div>
<div style="position:absolute;left:1095px;top:458px;width:5px;height:1px;background:#000;"></div>
<div style="position:absolute;left:1097px;top:456px;width:1px;height:5px;background:#000;"></div>
<div style="position:absolute;left:0px;top:1011px;width:1920px;height:21px;background:#f3f3f3;"></div>
<div style="position:absolute;left:0px;top:1010px;width:1920px;height:1px;background:#d6d6d6;"></div>
<div style="position:absolute;left:0px;top:1032px;width:1920px;height:48px;background:#eeeeee;"></div>
<div style="position:absolute;left:0px;top:1032px;width:1920px;height:1px;background:#d0d0d0;"></div>
<div style="position:absolute;left:14.64px;top:193.00px;font:normal normal 13.04px/13.04px 'Liberation Sans', sans-serif;color:#242424;white-space:pre;transform:scaleX(0.9575);transform-origin:0 0;-webkit-text-stroke:0.1px #242424;">L10</div>
<svg style="position:absolute;left:91px;top:195px;" width="12" height="8" viewBox="0 0 12 8"><path d="M1 1.5L6 6.5L11 1.5" fill="none" stroke="#424242" stroke-width="1.3"/></svg>
<svg style="position:absolute;left:119px;top:194px;" width="3" height="11" viewBox="0 0 3 11"><circle cx="1.5" cy="1.5" r="1" fill="#616161"/><circle cx="1.5" cy="5.5" r="1" fill="#616161"/><circle cx="1.5" cy="9.5" r="1" fill="#616161"/></svg>
<svg style="position:absolute;left:136px;top:192px;" width="14" height="14" viewBox="0 0 14 14"><path d="M1 1L13 13M13 1L1 13" stroke="#a3a3a3" stroke-width="1.1"/></svg>
<svg style="position:absolute;left:158px;top:192px;" width="18" height="14" viewBox="0 0 18 14"><path d="M1 8L5.5 12.5L17 1" fill="none" stroke="#a3a3a3" stroke-width="1.1"/></svg>
<div style="position:absolute;left:184.00px;top:190.00px;font:italic normal 16.67px/16.67px 'Liberation Serif', serif;color:#242424;white-space:pre;transform:scaleX(1.1667);transform-origin:0 0;-webkit-text-stroke:0.1px #242424;">fx</div>
<svg style="position:absolute;left:1896px;top:193px;" width="13" height="8" viewBox="0 0 13 8"><path d="M1 6.5L6.5 1L12 6.5" fill="none" stroke="#424242" stroke-width="1.2"/></svg>
<div style="position:absolute;left:104px;top:978px;width:110px;height:8px;background:#fff;"></div>
<div style="position:absolute;left:0px;top:978px;width:116px;height:32px;box-sizing:border-box;background:#f0f0f0;border-top-right-radius:6px;"></div>
<div style="position:absolute;left:202px;top:978px;width:1718px;height:32px;box-sizing:border-box;background:#f0f0f0;border-top-left-radius:6px;"></div>
<div style="position:absolute;left:208px;top:978px;width:1690px;height:1px;background:#dedede;"></div>
<div style="position:absolute;left:1901px;top:260px;width:17px;height:721px;box-sizing:border-box;background:#f6f6f6;border-radius:8px;"></div>
<svg style="position:absolute;left:1904px;top:263px;" width="11" height="9" viewBox="0 0 11 9"><path d="M5.5 1.5L10 8H1Z" fill="#707070" stroke="#707070" stroke-linejoin="round" stroke-width="1"/></svg>
<div style="position:absolute;left:1905px;top:276px;width:9px;height:669px;box-sizing:border-box;background:#707070;border-radius:4.5px;"></div>
<svg style="position:absolute;left:1904px;top:968px;" width="11" height="9" viewBox="0 0 11 9"><path d="M5.5 7.5L10 1H1Z" fill="#707070" stroke="#707070" stroke-linejoin="round" stroke-width="1"/></svg>
<div style="position:absolute;left:1154px;top:989px;width:2px;height:2px;background:#8f8f8f;"></div>
<div style="position:absolute;left:1154px;top:993px;width:2px;height:2px;background:#8f8f8f;"></div>
<div style="position:absolute;left:1154px;top:997px;width:2px;height:2px;background:#8f8f8f;"></div>
<div style="position:absolute;left:1171px;top:986px;width:730px;height:17px;box-sizing:border-box;background:#f6f6f6;border-radius:8px;"></div>
<svg style="position:absolute;left:1174px;top:989px;" width="10" height="11" viewBox="0 0 10 11"><path d="M1.5 5.5L8 1V10Z" fill="#707070" stroke="#707070" stroke-linejoin="round" stroke-width="1"/></svg>
<div style="position:absolute;left:1188px;top:990px;width:668px;height:9px;box-sizing:border-box;background:#707070;border-radius:4.5px;"></div>
<svg style="position:absolute;left:1888px;top:989px;" width="10" height="11" viewBox="0 0 10 11"><path d="M8.5 5.5L2 1V10Z" fill="#707070" stroke="#707070" stroke-linejoin="round" stroke-width="1"/></svg>
<div style="position:absolute;left:116px;top:978px;width:86px;height:28px;box-sizing:border-box;background:#fff;border-radius:0 0 6px 6px;box-shadow:0 0.5px 1px rgba(0,0,0,0.12);"></div>
<svg style="position:absolute;left:28px;top:988px;" width="9" height="12" viewBox="0 0 9 12"><path d="M7 1L2 6L7 11" fill="none" stroke="#a0a0a0" stroke-width="1.1"/></svg>
<svg style="position:absolute;left:60px;top:988px;" width="9" height="12" viewBox="0 0 9 12"><path d="M2 1L7 6L2 11" fill="none" stroke="#a0a0a0" stroke-width="1.1"/></svg>
<div style="position:absolute;left:124.40px;top:985.00px;font:normal normal 13.91px/13.91px 'Liberation Sans', sans-serif;color:#242424;white-space:pre;transform:scaleX(0.9213);transform-origin:0 0;-webkit-text-stroke:0.25px #242424;">ACTIVITIES</div>
<div style="position:absolute;left:124px;top:1001px;width:70px;height:2px;background:#107c41;"></div>
<div style="position:absolute;left:206px;top:985px;width:1px;height:18px;background:#c8c8c8;"></div>
<div style="position:absolute;left:222.00px;top:987.00px;font:normal normal 13.48px/13.48px 'Liberation Sans', sans-serif;color:#333;white-space:pre;transform:scaleX(0.9488);transform-origin:0 0;-webkit-text-stroke:0.1px #333;">ACTIVITY TRANSLATIONS</div>
<div style="position:absolute;left:395px;top:985px;width:1px;height:18px;background:#c8c8c8;"></div>
<div style="position:absolute;left:407.07px;top:987.00px;font:normal normal 13.48px/13.48px 'Liberation Sans', sans-serif;color:#333;white-space:pre;transform:scaleX(0.9324);transform-origin:0 0;-webkit-text-stroke:0.1px #333;">COUNTERS</div>
<div style="position:absolute;left:491px;top:985px;width:1px;height:18px;background:#c8c8c8;"></div>
<div style="position:absolute;left:505.05px;top:987.00px;font:normal normal 13.48px/13.48px 'Liberation Sans', sans-serif;color:#333;white-space:pre;transform:scaleX(0.9532);transform-origin:0 0;-webkit-text-stroke:0.1px #333;">COUNTER TRANSLATIONS</div>
<div style="position:absolute;left:685px;top:985px;width:1px;height:18px;background:#c8c8c8;"></div>
<svg style="position:absolute;left:728px;top:988px;" width="12" height="12" viewBox="0 0 12 12"><path d="M6 0.5V11.5M0.5 6H11.5" stroke="#424242" stroke-width="1.1"/></svg>
<div style="position:absolute;left:6.51px;top:1018.00px;font:normal normal 11.88px/11.88px 'Liberation Sans', sans-serif;color:#242424;white-space:pre;transform:scaleX(0.9853);transform-origin:0 0;-webkit-text-stroke:0.1px #242424;">Pronto</div>
<svg style="position:absolute;left:0;top:0" width="1500" height="1080">
<path d="M1429.8 1023.6H1426.6V1015.6H1439.4V1019.5" fill="none" stroke="#1a1a1a" stroke-width="1.1"/>
<path d="M1435.5 1019.3L1436.6 1020.8L1438.9 1020.5L1438.2 1022.3L1439.4 1023.5L1438.2 1024.7L1438.9 1026.5L1436.6 1026.2L1435.5 1027.7L1434.4 1026.2L1432.1 1026.5L1432.8 1024.7L1431.6 1023.5L1432.8 1022.3L1432.1 1020.5L1434.4 1020.8Z" fill="#f3f3f3" stroke="#1a1a1a" stroke-width="1" stroke-linejoin="round"/>
<circle cx="1435.5" cy="1023.5" r="0.9" fill="#1a1a1a"/>
</svg>
<div style="position:absolute;left:1442.84px;top:1017.00px;font:normal normal 12.03px/12.03px 'Liberation Sans', sans-serif;color:#242424;white-space:pre;transform:scaleX(0.9613);transform-origin:0 0;-webkit-text-stroke:0.1px #242424;">Impostazioni di visualizzazione</div>
<div style="position:absolute;left:1620px;top:1011px;width:40px;height:21px;background:#dedede;"></div>
<svg style="position:absolute;left:1632px;top:1013px;" width="15" height="15" viewBox="0 0 15 15"><path d="M0.5 0.5H13.5V13.5H0.5ZM4.83 0.5V13.5M9.17 0.5V13.5M0.5 4.83H13.5M0.5 9.17H13.5" fill="none" stroke="#242424" stroke-width="1"/></svg>
<svg style="position:absolute;left:1672px;top:1013px;" width="16" height="15" viewBox="0 0 16 15"><rect x="0.5" y="0.5" width="14" height="13" fill="none" stroke="#242424"/><rect x="3.5" y="3.5" width="8" height="7" fill="none" stroke="#242424"/><path d="M5 5.5H10M5 7.5H10M5 9H10" stroke="#242424" stroke-width="0.8"/></svg>
<svg style="position:absolute;left:1712px;top:1013px;" width="16" height="15" viewBox="0 0 16 15"><rect x="0.5" y="0.5" width="14" height="13" fill="none" stroke="#242424"/><path d="M4.5 0.5V7.5H10.5V0.5" fill="none" stroke="#242424"/></svg>
<div style="position:absolute;left:1745px;top:1020px;width:7px;height:1.2px;background:#424242;"></div>
<div style="position:absolute;left:1759px;top:1021px;width:100px;height:1px;background:#c4c4c4;"></div>
<div style="position:absolute;left:1807px;top:1016px;width:4px;height:11px;background:#5c5c5c;"></div>
<svg style="position:absolute;left:1864px;top:1015px;" width="10" height="10" viewBox="0 0 10 10"><path d="M5 0.5V9.5M0.5 5H9.5" stroke="#424242" stroke-width="1.1"/></svg>
<div style="position:absolute;left:1885.10px;top:1017.00px;font:normal normal 12.03px/12.03px 'Liberation Sans', sans-serif;color:#242424;white-space:pre;transform:scaleX(0.8966);transform-origin:0 0;-webkit-text-stroke:0.1px #242424;">100%</div>
<svg style="position:absolute;left:20px;top:1044px;" width="22" height="22" viewBox="0 0 22 22"><defs><linearGradient id="sun" x1="0" y1="0" x2="1" y2="1"><stop offset="0" stop-color="#f8b61e"/><stop offset="1" stop-color="#ee5a12"/></linearGradient></defs><circle cx="11" cy="11" r="10" fill="url(#sun)"/></svg>
<div style="position:absolute;left:50.60px;top:1043.00px;font:normal normal 11.30px/11.30px 'Liberation Sans', sans-serif;color:#1a1a1a;white-space:pre;transform:scaleX(0.9880);transform-origin:0 0;-webkit-text-stroke:0.01px #1a1a1a;">28°C</div>
<div style="position:absolute;left:49.49px;top:1059.00px;font:normal normal 11.30px/11.30px 'Liberation Sans', sans-serif;color:#5c5c5c;white-space:pre;transform:scaleX(1.1115);transform-origin:0 0;-webkit-text-stroke:0.01px #5c5c5c;">Soleggiato</div>
<svg style="position:absolute;left:375px;top:1045px;" width="23" height="23" viewBox="0 0 23 23"><defs><linearGradient id="win" x1="0" y1="0" x2="1" y2="1"><stop offset="0" stop-color="#52c7f7"/><stop offset="1" stop-color="#0a6fd1"/></linearGradient></defs>
<rect x="0" y="0" width="10.8" height="10.8" fill="url(#win)"/><rect x="12.2" y="0" width="10.8" height="10.8" fill="url(#win)"/>
<rect x="0" y="12.2" width="10.8" height="10.8" fill="url(#win)"/><rect x="12.2" y="12.2" width="10.8" height="10.8" fill="url(#win)"/></svg>
<div style="position:absolute;left:411px;top:1040px;width:220px;height:32px;box-sizing:border-box;background:#f9f9f9;border:1px solid #dedede;border-radius:16px;"></div>
<svg style="position:absolute;left:422px;top:1048px;" width="16" height="16" viewBox="0 0 16 16"><circle cx="6.5" cy="6.5" r="5" fill="none" stroke="#1a1a1a" stroke-width="1.8"/><path d="M10.3 10.3L14.5 14.5" stroke="#1a1a1a" stroke-width="2" stroke-linecap="round"/></svg>
<div style="position:absolute;left:447.63px;top:1049.00px;font:normal normal 14.49px/14.49px 'Liberation Sans', sans-serif;color:#5c5c5c;white-space:pre;transform:scaleX(0.8684);transform-origin:0 0;-webkit-text-stroke:0.1px #5c5c5c;">Cerca</div>
<svg style="position:absolute;left:642px;top:1044px;" width="26" height="24" viewBox="0 0 26 24"><defs><linearGradient id="tv1" x1="0" y1="0" x2="1" y2="1"><stop offset="0" stop-color="#fdfdfd"/><stop offset="1" stop-color="#c8c8c8"/></linearGradient>
<linearGradient id="tv2" x1="0" y1="0" x2="0" y2="1"><stop offset="0" stop-color="#555"/><stop offset="1" stop-color="#111"/></linearGradient></defs>
<rect x="1" y="7" width="18" height="16" rx="1.5" fill="url(#tv2)"/>
<rect x="7" y="1" width="18" height="16" rx="1.5" fill="url(#tv1)"/>
<rect x="7" y="7" width="12" height="10" fill="#b0b0b0"/></svg>
<svg style="position:absolute;left:687px;top:1044px;" width="26" height="26" viewBox="0 0 26 26"><rect x="1" y="1" width="22" height="22" rx="2" fill="#ededed"/>
<rect x="2.5" y="2.5" width="10" height="10" rx="2" fill="#f3f3f3" stroke="#d83b01" stroke-width="2" stroke-dasharray="2.2 1.4"/>
<path d="M12 6V14H20" fill="none" stroke="#8a8f96" stroke-width="2.2"/>
<circle cx="21" cy="13.5" r="2.4" fill="#fff" stroke="#1e90e8" stroke-width="1.5"/><circle cx="12" cy="22.5" r="2.4" fill="#fff" stroke="#1e90e8" stroke-width="1.5"/></svg>
<svg style="position:absolute;left:731px;top:1045px;" width="25" height="23" viewBox="0 0 25 23"><path d="M0 2.5Q0 0.5 2 0.5H8L10 2.5H23Q24 2.5 24 4V21.5Q24 22.5 23 22.5H1Q0 22.5 0 21.5Z" fill="#f2b01e"/>
<rect x="0" y="5" width="24" height="17.5" rx="1" fill="#ffd35a"/>
<rect x="4" y="15" width="16" height="7.5" rx="1.5" fill="#1479d2"/><rect x="7.5" y="17.5" width="9" height="1.5" fill="#0b4f94"/></svg>
<svg style="position:absolute;left:774px;top:1044px;" width="28" height="25" viewBox="0 0 28 25"><circle cx="17" cy="6" r="3.5" fill="#7b83eb"/><path d="M11 9.5H22Q24 9.5 24 11.5V17Q24 22 18 22Q11 22 11 17Z" fill="#5059c9"/>
<circle cx="13" cy="5" r="4" fill="#7b83eb"/><path d="M6 9.5H18V18Q18 24 12 24Q6 24 6 18Z" fill="#7b83eb"/>
<rect x="0.5" y="7" width="12" height="12" rx="1" fill="#4b53bc"/><path d="M3.5 10H9.5M6.5 10V16.5" stroke="#fff" stroke-width="1.8"/></svg>
<svg style="position:absolute;left:788px;top:1039px;" width="16" height="16" viewBox="0 0 16 16"><circle cx="8" cy="8" r="8" fill="#d13438"/></svg>
<svg style="position:absolute;left:818px;top:1044px;" width="25" height="25" viewBox="0 0 25 25"><rect x="6" y="1" width="18" height="22" rx="1.5" fill="#0364b8"/><rect x="15" y="1" width="9" height="11" fill="#28a8ea"/><rect x="6" y="6" width="9" height="6" fill="#0078d4"/>
<path d="M6 12L24 12V23H7Z" fill="#1490df"/><path d="M6 23L24 12V22Q24 23 23 23Z" fill="#28a8ea"/>
<rect x="0.5" y="5.5" width="12" height="12" rx="1" fill="#0f64c4"/><ellipse cx="6.5" cy="11.5" rx="3" ry="3.4" fill="none" stroke="#fff" stroke-width="1.8"/></svg>
<svg style="position:absolute;left:862px;top:1044px;" width="26" height="26" viewBox="0 0 26 26"><path d="M12.5 2A10.5 10.5 0 1 1 6.8 21.4L1.5 23L3.2 18A10.5 10.5 0 0 1 12.5 2Z" fill="#fff" stroke="#25a244" stroke-width="2"/>
<path d="M8.5 8.5Q8.5 7 9.8 7L11 9.5L10 11Q11.5 14 14 15.3L15.5 14.2L18 15.5Q18 17 16.5 17Q8.5 16 8.5 8.5Z" fill="#1a8a3a"/></svg>
<svg style="position:absolute;left:875px;top:1039px;" width="16" height="16" viewBox="0 0 16 16"><circle cx="8" cy="8" r="7.8" fill="#0b66c8"/><text x="8" y="12.2" text-anchor="middle" font-family="Liberation Sans" font-size="11.5" fill="#fff">2</text></svg>
<svg style="position:absolute;left:906px;top:1043px;" width="26" height="26" viewBox="0 0 26 26"><circle cx="12.5" cy="13" r="12" fill="#db4437"/>
<path d="M12.5 13L2.1 19A12 12 0 0 0 12.5 25Z M12.5 25A12 12 0 0 0 24.5 13H12.5Z" fill="#0f9d58"/>
<path d="M12.5 13H24.5A12 12 0 0 0 22.9 7L12.5 13L18.5 23.4A12 12 0 0 0 24.5 13Z" fill="#ffcd40"/>
<path d="M12.5 13L2.1 19A12 12 0 0 0 12.5 25L18.5 23.4Z" fill="#0f9d58"/>
<circle cx="12.5" cy="13" r="5.3" fill="#fff"/><circle cx="12.5" cy="13" r="4.2" fill="#4285f4"/></svg>
<svg style="position:absolute;left:920px;top:1039px;" width="17" height="17" viewBox="0 0 17 17"><circle cx="8.5" cy="8.5" r="8.3" fill="#7a8a96"/><path d="M5.5 4.5L8.5 12.5L11.5 4.5" fill="none" stroke="#fff" stroke-width="1.6"/></svg>
<svg style="position:absolute;left:950px;top:1044px;" width="25" height="25" viewBox="0 0 25 25"><g transform="scale(1.02)"><path fill="#111" d="M22.2819 9.8211a5.9847 5.9847 0 0 0-.5157-4.9108 6.0462 6.0462 0 0 0-6.5098-2.9A6.0651 6.0651 0 0 0 4.9807 4.1818a5.9847 5.9847 0 0 0-3.9977 2.9 6.0462 6.0462 0 0 0 .7427 7.0966 5.98 5.98 0 0 0 .511 4.9107 6.051 6.051 0 0 0 6.5146 2.9001A5.9847 5.9847 0 0 0 13.2599 24a6.0557 6.0557 0 0 0 5.7718-4.2058 5.9894 5.9894 0 0 0 3.9977-2.9001 6.0557 6.0557 0 0 0-.7475-7.0729zm-9.022 12.6081a4.4755 4.4755 0 0 1-2.8764-1.0408l.1419-.0804 4.7783-2.7582a.7948.7948 0 0 0 .3927-.6813v-6.7369l2.02 1.1686a.071.071 0 0 1 .038.052v5.5826a4.504 4.504 0 0 1-4.4945 4.4944zm-9.6607-4.1254a4.4708 4.4708 0 0 1-.5346-3.0137l.142.0852 4.783 2.7582a.7712.7712 0 0 0 .7806 0l5.8428-3.3685v2.3324a.0804.0804 0 0 1-.0332.0615L9.74 19.9502a4.4992 4.4992 0 0 1-6.1408-1.6464zM2.3408 7.8956a4.485 4.485 0 0 1 2.3655-1.9728V11.6a.7664.7664 0 0 0 .3879.6765l5.8144 3.3543-2.0201 1.1685a.0757.0757 0 0 1-.071 0l-4.8303-2.7865A4.504 4.504 0 0 1 2.3408 7.872zm16.5963 3.8558L13.1038 8.364 15.1192 7.2a.0757.0757 0 0 1 .071 0l4.8303 2.7913a4.4944 4.4944 0 0 1-.6765 8.1042v-5.6772a.79.79 0 0 0-.407-.667zm2.0107-3.0231l-.142-.0852-4.7735-2.7818a.7759.7759 0 0 0-.7854 0L9.409 9.2297V6.8974a.0662.0662 0 0 1 .0284-.0615l4.8303-2.7866a4.4992 4.4992 0 0 1 6.6802 4.66zM8.3065 12.863l-2.02-1.1638a.0804.0804 0 0 1-.038-.0567V6.0742a4.4992 4.4992 0 0 1 7.3757-3.4537l-.142.0805L8.704 5.459a.7948.7948 0 0 0-.3927.6813zm1.0976-2.3654l2.602-1.4998 2.6069 1.4998v2.9994l-2.5974 1.4997-2.6067-1.4997Z"/></g></svg>
<svg style="position:absolute;left:994px;top:1044px;" width="25" height="25" viewBox="0 0 25 25"><rect x="5.5" y="1" width="18.5" height="22" rx="1.5" fill="#ca64ea"/><rect x="18" y="6" width="6" height="5.5" fill="#ae4bd5"/><rect x="18" y="11.5" width="6" height="5.5" fill="#9332bf"/><rect x="18" y="17" width="6" height="6" fill="#7719aa"/>
<rect x="0.5" y="5.5" width="12" height="12" rx="1" fill="#7719aa"/><path d="M3.8 14.5V8.5L9.2 14.5V8.5" fill="none" stroke="#fff" stroke-width="1.6"/></svg>
<svg style="position:absolute;left:1036px;top:1042px;" width="32" height="28" viewBox="0 0 32 28"><defs><linearGradient id="npg" x1="0" y1="0" x2="0" y2="1"><stop offset="0" stop-color="#f5fbff"/><stop offset="0.38" stop-color="#e2eef6"/><stop offset="0.45" stop-color="#e8f55a"/><stop offset="0.7" stop-color="#8ee03a"/><stop offset="1" stop-color="#0c9a0c"/></linearGradient></defs>
<path d="M4 3.5H17.5L21.5 7.5L22 24L4.5 24.8Z" fill="url(#npg)" stroke="#c9c9c9" stroke-width="0.9"/>
<path d="M5 4.5L6 6M8 4.5L9 6M11 4.5L12 6M14 4.5L15 6" stroke="#9a9a9a" stroke-width="0.8"/>
<ellipse cx="11.5" cy="14.5" rx="4.5" ry="3.2" fill="#3f9b2a"/><circle cx="13.5" cy="12" r="1.8" fill="#e6e6e6" stroke="#555" stroke-width="0.6"/>
<path d="M7 16.5Q11 18 16 16.5" stroke="#5a3a1a" stroke-width="0.9" fill="none"/>
<path d="M19.5 20L25.5 4.5" stroke="#e0a020" stroke-width="2.3"/><path d="M25.3 5L26 3" stroke="#a83a2a" stroke-width="2"/>
<path d="M19.2 21L19.6 19.6" stroke="#333" stroke-width="1.2"/></svg>
<svg style="position:absolute;left:1082px;top:1043px;" width="26" height="26" viewBox="0 0 26 26"><path d="M18.5 1L24.5 4V21L18.5 24.5L7 14L3 17.5L1 16V9L3 7.5L7 11Z" fill="#1f9cf0"/>
<path d="M18.5 1L7 11L3 7.5L1 9V16L3 17.5L7 14L18.5 24.5V17.5L11 12.5L18.5 7.5Z" fill="#0065a9"/>
<path d="M18.5 7.5V17.5L11 12.5Z" fill="#eeeeee"/></svg>
<svg style="position:absolute;left:1126px;top:1046px;" width="26" height="21" viewBox="0 0 26 21"><rect x="0.5" y="0.5" width="24.5" height="19.5" rx="1.5" fill="#2d2d2d"/><rect x="0.5" y="0.5" width="24.5" height="3" fill="#5a5a5a"/>
<path d="M4 7.5L9 11L4 14.5" fill="none" stroke="#d0d0d0" stroke-width="2"/><rect x="11" y="14" width="7" height="2" fill="#d0d0d0"/></svg>
<svg style="position:absolute;left:1170px;top:1044px;" width="26" height="25" viewBox="0 0 26 25"><rect x="1" y="1" width="22" height="16" fill="#2d2d2d" stroke="#6e6e6e" stroke-width="0.8"/>
<path d="M3.5 4L6 5.5L3.5 7" fill="none" stroke="#ddd" stroke-width="1"/>
<path d="M9 16L14 11L19 16L14 21Z" fill="#e84a5f"/><path d="M14 11L19 6L24 11L19 16Z" fill="#3f8fe8"/><path d="M14 21L19 16L24 21L19 25Z" fill="#8cc63f"/><path d="M19 16L24 11L25 16L24 21Z" fill="#f1c40f"/></svg>
<svg style="position:absolute;left:1214px;top:1043px;" width="23" height="26" viewBox="0 0 23 26"><path d="M11.5 1L21.5 6V18.5L11.5 24L1.5 18.5V6Z" fill="#dfe6f0" stroke="#9fb0c8" stroke-width="0.8"/>
<path d="M11.5 3L19.5 7L11.5 11L3.5 7Z" fill="#203a63"/><path d="M3.5 8.5L10.5 12.5V21.5L3.5 17.5Z" fill="#1d3c6e"/><path d="M19.5 8.5L12.5 12.5V21.5L19.5 17.5Z" fill="#2b5290"/></svg>
<svg style="position:absolute;left:1258px;top:1043px;" width="26" height="26" viewBox="0 0 26 26"><circle cx="13" cy="13" r="11.3" fill="#fff" stroke="#48b3be" stroke-width="1.4"/>
<path d="M5.5 11Q8 6 13 5.5" fill="none" stroke="#3a2b25" stroke-width="0.8"/>
<path d="M4.6 9.5Q6.5 8.6 7.6 9.3L6.2 15L4.6 16.8Z" fill="#3a2b25"/>
<circle cx="11.6" cy="7.6" r="1" fill="#3a2b25"/><ellipse cx="17.4" cy="9" rx="2.3" ry="1.6" fill="#3a2b25"/>
<path d="M8 24Q8.3 18 10 15.5Q13.5 17.8 16.5 18.3L18.3 16Q19.2 20.5 17.8 23.6Q13 25.3 8 24Z" fill="#3a2b25"/>
<path d="M15.5 20L17 19L16.6 21Z" fill="#fff"/></svg>
<svg style="position:absolute;left:1303px;top:1043px;" width="23" height="25" viewBox="0 0 23 25"><rect x="1" y="1" width="6" height="4" fill="#8ab9f3"/><rect x="7" y="6" width="6" height="4" fill="#5b9bef"/><rect x="1" y="11" width="6" height="4" fill="#1a73e8"/>
<rect x="14" y="11" width="6" height="4" fill="#fff"/><rect x="7" y="16" width="6" height="4" fill="#fff"/><rect x="14" y="16" width="6" height="4" fill="#5b9bef"/>
<rect x="1" y="20.5" width="6" height="4" fill="#1565c0"/><rect x="7.5" y="20.5" width="6" height="4" fill="#1565c0"/><rect x="14" y="20.5" width="6" height="4" fill="#1565c0"/></svg>
<svg style="position:absolute;left:1346px;top:1043px;" width="26" height="26" viewBox="0 0 26 26"><rect x="1.5" y="1.5" width="22.5" height="22.5" rx="3" fill="#29587e"/>
<path d="M5 7Q9 6 13 11Q16 15 20 19M7 8Q9 13 11 15" fill="none" stroke="#cfe0ef" stroke-width="0.9"/>
<path d="M17 3.5L21 7.5M19 5.5L21.5 3.5" stroke="#e6eef5" stroke-width="1.3"/></svg>
<svg style="position:absolute;left:1390px;top:1043px;" width="26" height="26" viewBox="0 0 26 26"><circle cx="12.5" cy="12.5" r="12" fill="#ff6c37"/>
<path d="M5.5 19.5L17 8" stroke="#fff" stroke-width="2.2"/><circle cx="18.5" cy="6.5" r="2.3" fill="#fff"/></svg>
<svg style="position:absolute;left:1434px;top:1044px;" width="26" height="25" viewBox="0 0 26 25"><path d="M12.5 1.5L15 1.8L15.8 4.5L18.3 5.9L21 5.1L22.8 7.2L22 9.9L23.3 12.4L25 13.5L23.3 15.3L22 17.5L22.8 20.3L21 22.2L18.3 21.4L15.8 22.8L15 24H10L9.2 22.8L6.7 21.4L4 22.2L2.2 20.3L3 17.5L1.7 15.3L0 13.5L1.7 12.4L3 9.9L2.2 7.2L4 5.1L6.7 5.9L9.2 4.5L10 1.8Z" fill="#6e7780"/>
<circle cx="12.5" cy="12.7" r="6.3" fill="#fff"/><circle cx="12.5" cy="12.7" r="4.8" fill="#1565c0"/></svg>
<svg style="position:absolute;left:1479px;top:1044px;" width="24" height="25" viewBox="0 0 24 25"><defs><linearGradient id="ph" x1="0" y1="0" x2="1" y2="1"><stop offset="0" stop-color="#2b8fe6"/><stop offset="1" stop-color="#7a4fc4"/></linearGradient></defs>
<rect x="1" y="1" width="22" height="22" rx="3" fill="url(#ph)"/>
<path d="M1 20L9.5 11L16 17.5L23 14V20Q23 23 20 23H4Q1 23 1 20Z" fill="#3ec3f5"/><path d="M5 23L12.5 14.5L20 23Z" fill="#1c86d9"/>
<circle cx="18" cy="5.2" r="2" fill="#fff"/></svg>
<div style="position:absolute;left:1516px;top:1037px;width:38px;height:39px;box-sizing:border-box;background:#f6f6f6;border:1px solid #e2e2e2;border-radius:5px;"></div>
<div style="position:absolute;left:1516px;top:1037px;width:34px;height:39px;box-sizing:border-box;background:#f7f7f7;border:1px solid #e4e4e4;border-radius:5px;"></div>
<svg style="position:absolute;left:1522px;top:1044px;" width="26" height="25" viewBox="0 0 26 25"><rect x="6" y="1" width="18.5" height="22" rx="1.5" fill="#21a366"/><rect x="15.5" y="1" width="9" height="6" fill="#33c481"/>
<rect x="6" y="12" width="18.5" height="5.5" fill="#107c41"/><rect x="6" y="17.5" width="18.5" height="5.5" rx="1" fill="#185c37"/>
<rect x="15.5" y="7" width="9" height="5" fill="#21a366"/>
<rect x="0.5" y="5.5" width="12" height="12" rx="1" fill="#107c41"/><path d="M3.5 8.5L9.5 14.5M9.5 8.5L3.5 14.5" stroke="#fff" stroke-width="1.7"/></svg>
<div style="position:absolute;left:1527px;top:1072px;width:16px;height:3px;background:#0067c0;border-radius:1.5px;"></div>
<div style="position:absolute;left:740px;top:1072.5px;width:6px;height:2.2px;background:#8a8a8a;border-radius:1.1px;"></div>
<div style="position:absolute;left:784px;top:1072.5px;width:6px;height:2.2px;background:#8a8a8a;border-radius:1.1px;"></div>
<div style="position:absolute;left:828px;top:1072.5px;width:6px;height:2.2px;background:#8a8a8a;border-radius:1.1px;"></div>
<div style="position:absolute;left:916px;top:1072.5px;width:6px;height:2.2px;background:#8a8a8a;border-radius:1.1px;"></div>
<div style="position:absolute;left:960px;top:1072.5px;width:6px;height:2.2px;background:#8a8a8a;border-radius:1.1px;"></div>
<div style="position:absolute;left:1092px;top:1072.5px;width:6px;height:2.2px;background:#8a8a8a;border-radius:1.1px;"></div>
<div style="position:absolute;left:1180px;top:1072.5px;width:6px;height:2.2px;background:#8a8a8a;border-radius:1.1px;"></div>
<div style="position:absolute;left:1444px;top:1072.5px;width:6px;height:2.2px;background:#8a8a8a;border-radius:1.1px;"></div>
<div style="position:absolute;left:1488px;top:1072.5px;width:6px;height:2.2px;background:#8a8a8a;border-radius:1.1px;"></div>
<div style="position:absolute;left:1871.48px;top:1043.00px;font:normal normal 11.30px/11.30px 'Liberation Sans', sans-serif;color:#333333;white-space:pre;transform:scaleX(1.0185);transform-origin:0 0;-webkit-text-stroke:0.01px #333333;">17:21</div>
<div style="position:absolute;left:1839.00px;top:1059.00px;font:normal normal 11.30px/11.30px 'Liberation Sans', sans-serif;color:#333333;white-space:pre;transform:scaleX(1.0982);transform-origin:0 0;-webkit-text-stroke:0.01px #333333;">04/09/2025</div>
</body></html>
